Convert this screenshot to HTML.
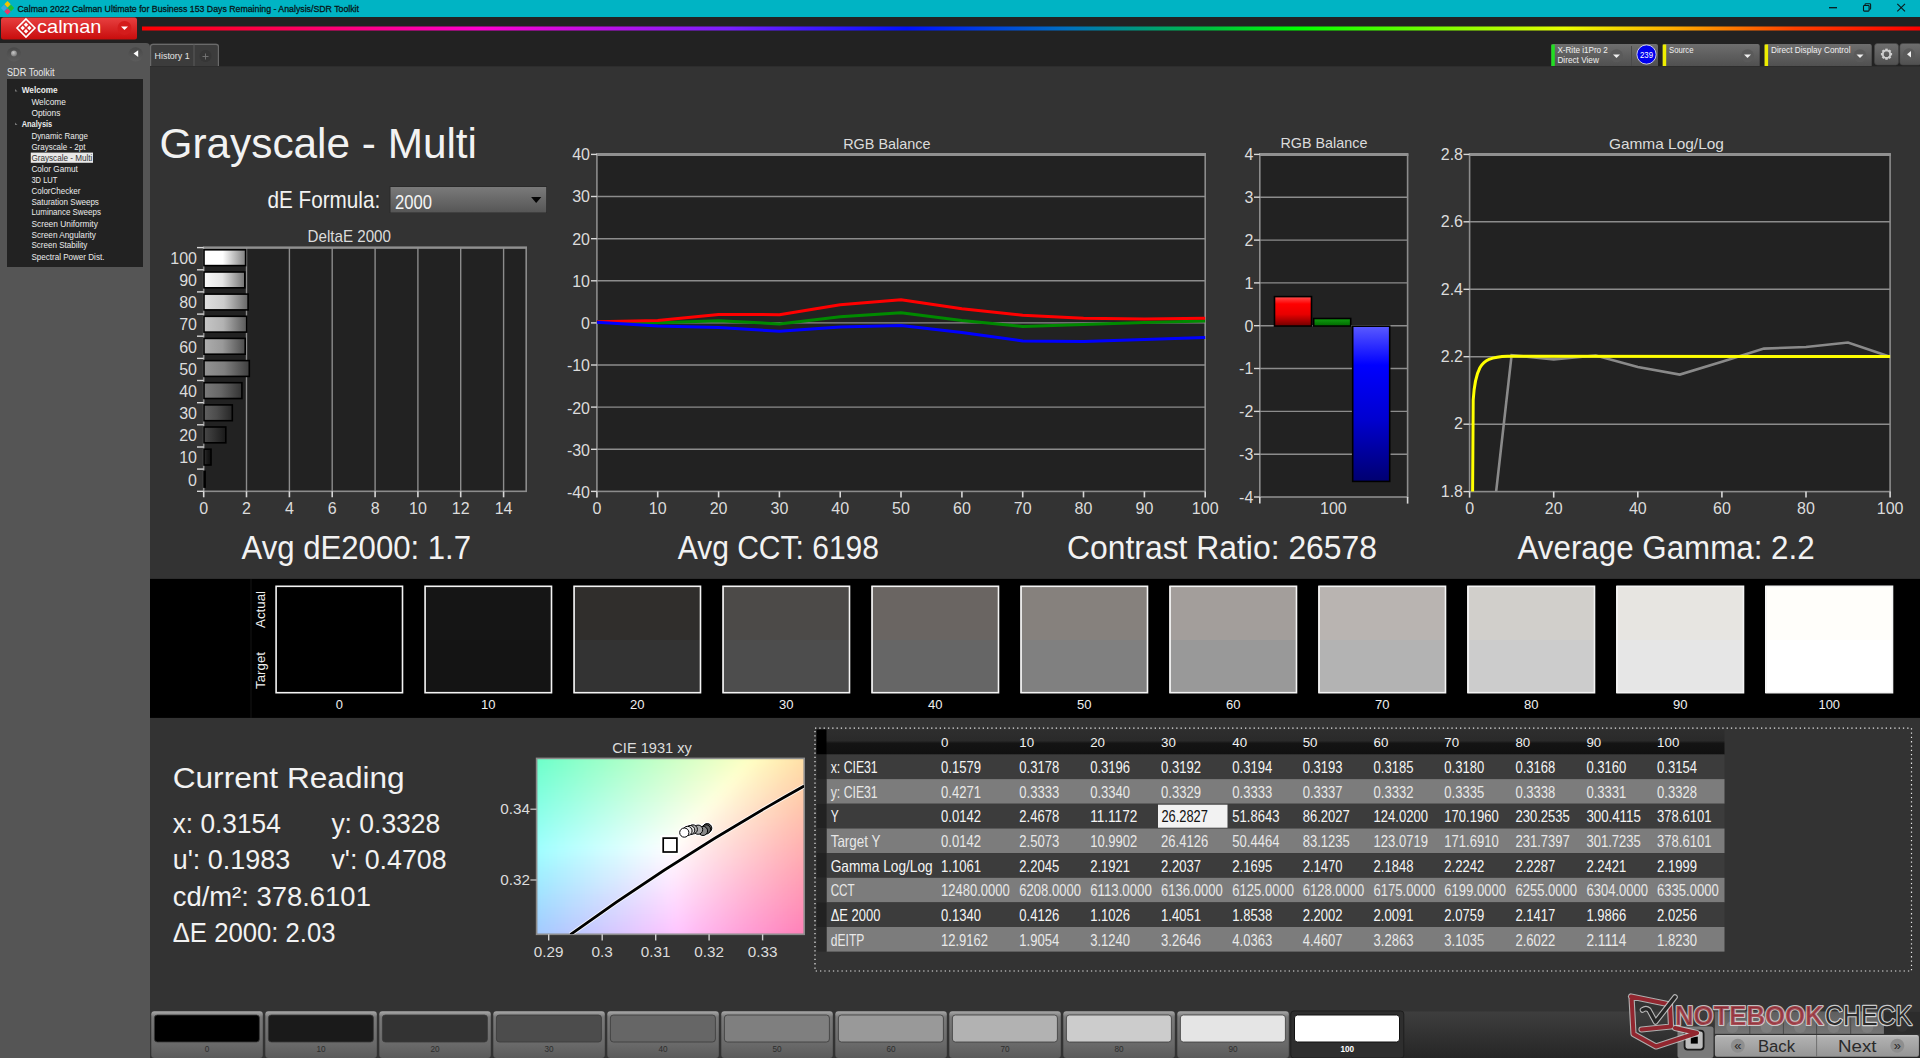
<!DOCTYPE html>
<html><head><meta charset="utf-8"><title>Calman - Grayscale Multi</title>
<style>html,body{margin:0;padding:0;background:#333;overflow:hidden;width:1920px;height:1058px}svg{display:block;font-family:"Liberation Sans",sans-serif}</style>
</head><body>
<svg width="1920" height="1058" viewBox="0 0 1920 1058">
<defs>
<linearGradient id="rainbow" x1="142" y1="0" x2="1920" y2="0" gradientUnits="userSpaceOnUse">
<stop offset="0" stop-color="#ff0000"/><stop offset="0.19" stop-color="#ff00d0"/><stop offset="0.33" stop-color="#7a20ff"/>
<stop offset="0.43" stop-color="#0010ff"/><stop offset="0.52" stop-color="#0070c0"/><stop offset="0.60" stop-color="#00c040"/><stop offset="0.65" stop-color="#00ff00"/>
<stop offset="0.80" stop-color="#e8ff00"/><stop offset="0.86" stop-color="#ffb000"/><stop offset="0.93" stop-color="#ff4000"/><stop offset="1" stop-color="#ff0000"/></linearGradient>
<linearGradient id="redlogo" x1="0" y1="0" x2="0" y2="1"><stop offset="0" stop-color="#e84040"/><stop offset="1" stop-color="#c80c0c"/></linearGradient>
<linearGradient id="pbtn" x1="0" y1="0" x2="0" y2="1"><stop offset="0" stop-color="#484848"/><stop offset="1" stop-color="#5c5c5c"/></linearGradient>
<radialGradient id="pball" cx="0.4" cy="0.35" r="0.7"><stop offset="0" stop-color="#c8c8c8"/><stop offset="1" stop-color="#707070"/></radialGradient>
<linearGradient id="tbgrad" x1="0" y1="0" x2="0" y2="1"><stop offset="0" stop-color="#6e6e6e"/><stop offset="1" stop-color="#505050"/></linearGradient>
<linearGradient id="ddgrad" x1="0" y1="0" x2="0" y2="1"><stop offset="0" stop-color="#7a7a7a"/><stop offset="1" stop-color="#565656"/></linearGradient>
<linearGradient id="bg100" x1="0" y1="0" x2="1" y2="0"><stop offset="0" stop-color="rgb(255,255,255)"/><stop offset="0.45" stop-color="rgb(255,255,255)"/><stop offset="1" stop-color="rgb(127,127,127)"/></linearGradient>
<linearGradient id="bg90" x1="0" y1="0" x2="1" y2="0"><stop offset="0" stop-color="rgb(249,249,249)"/><stop offset="0.45" stop-color="rgb(229,229,229)"/><stop offset="1" stop-color="rgb(114,114,114)"/></linearGradient>
<linearGradient id="bg80" x1="0" y1="0" x2="1" y2="0"><stop offset="0" stop-color="rgb(224,224,224)"/><stop offset="0.45" stop-color="rgb(204,204,204)"/><stop offset="1" stop-color="rgb(102,102,102)"/></linearGradient>
<linearGradient id="bg70" x1="0" y1="0" x2="1" y2="0"><stop offset="0" stop-color="rgb(198,198,198)"/><stop offset="0.45" stop-color="rgb(178,178,178)"/><stop offset="1" stop-color="rgb(89,89,89)"/></linearGradient>
<linearGradient id="bg60" x1="0" y1="0" x2="1" y2="0"><stop offset="0" stop-color="rgb(173,173,173)"/><stop offset="0.45" stop-color="rgb(153,153,153)"/><stop offset="1" stop-color="rgb(76,76,76)"/></linearGradient>
<linearGradient id="bg50" x1="0" y1="0" x2="1" y2="0"><stop offset="0" stop-color="rgb(147,147,147)"/><stop offset="0.45" stop-color="rgb(127,127,127)"/><stop offset="1" stop-color="rgb(63,63,63)"/></linearGradient>
<linearGradient id="bg40" x1="0" y1="0" x2="1" y2="0"><stop offset="0" stop-color="rgb(122,122,122)"/><stop offset="0.45" stop-color="rgb(102,102,102)"/><stop offset="1" stop-color="rgb(51,51,51)"/></linearGradient>
<linearGradient id="bg30" x1="0" y1="0" x2="1" y2="0"><stop offset="0" stop-color="rgb(96,96,96)"/><stop offset="0.45" stop-color="rgb(76,76,76)"/><stop offset="1" stop-color="rgb(38,38,38)"/></linearGradient>
<linearGradient id="bg20" x1="0" y1="0" x2="1" y2="0"><stop offset="0" stop-color="rgb(71,71,71)"/><stop offset="0.45" stop-color="rgb(51,51,51)"/><stop offset="1" stop-color="rgb(25,25,25)"/></linearGradient>
<linearGradient id="bg10" x1="0" y1="0" x2="1" y2="0"><stop offset="0" stop-color="rgb(46,46,46)"/><stop offset="0.45" stop-color="rgb(26,26,26)"/><stop offset="1" stop-color="rgb(13,13,13)"/></linearGradient>
<linearGradient id="bg0" x1="0" y1="0" x2="1" y2="0"><stop offset="0" stop-color="rgb(20,20,20)"/><stop offset="0.45" stop-color="rgb(0,0,0)"/><stop offset="1" stop-color="rgb(0,0,0)"/></linearGradient>
<linearGradient id="rbar" x1="0" y1="0" x2="0" y2="1"><stop offset="0" stop-color="#ff5050"/><stop offset="0.25" stop-color="#ff0000"/><stop offset="0.6" stop-color="#e80000"/><stop offset="1" stop-color="#700000"/></linearGradient>
<linearGradient id="gbar" x1="0" y1="0" x2="0" y2="1"><stop offset="0" stop-color="#10a010"/><stop offset="1" stop-color="#006600"/></linearGradient>
<linearGradient id="bbar" x1="0" y1="0" x2="0" y2="1"><stop offset="0" stop-color="#5a5aff"/><stop offset="0.25" stop-color="#0000ff"/><stop offset="0.6" stop-color="#0000d0"/><stop offset="1" stop-color="#000070"/></linearGradient>
<filter id="cblur" x="0" y="0" width="1" height="1"><feGaussianBlur stdDeviation="5" edgeMode="duplicate"/></filter>
<linearGradient id="thead" x1="0" y1="0" x2="0" y2="1"><stop offset="0" stop-color="#2e2e2e"/><stop offset="0.45" stop-color="#2a2a2a"/><stop offset="0.55" stop-color="#141414"/><stop offset="1" stop-color="#101010"/></linearGradient>
<linearGradient id="btn" x1="0" y1="0" x2="0" y2="1"><stop offset="0" stop-color="#a8a8a8"/><stop offset="0.12" stop-color="#7a7a7a"/><stop offset="0.7" stop-color="#6a6a6a"/><stop offset="1" stop-color="#5a5a5a"/></linearGradient>
<linearGradient id="strip" x1="0" y1="0" x2="0" y2="1"><stop offset="0" stop-color="#3e3e3e"/><stop offset="1" stop-color="#262626"/></linearGradient>
<linearGradient id="nav" x1="0" y1="0" x2="0" y2="1"><stop offset="0" stop-color="#c4c4c4"/><stop offset="0.12" stop-color="#b0b0b0"/><stop offset="1" stop-color="#959595"/></linearGradient>
<linearGradient id="tbtn" x1="0" y1="0" x2="0" y2="1"><stop offset="0" stop-color="#5e5e5e"/><stop offset="1" stop-color="#767676"/></linearGradient>
</defs>
<rect x="0.0" y="0.0" width="1920.0" height="1058.0" fill="#333333" />
<rect x="0.0" y="0.0" width="1920.0" height="17.0" fill="#00b4c4" />
<path d="M7.5 1.0 L10.7 4.2 L7.5 7.4 L4.3 4.2 Z" fill="#f5c400"/>
<path d="M11 4.8 L14.2 8 L11 11.2 L7.8 8 Z" fill="#22c030"/>
<path d="M4 4.8 L7.2 8 L4 11.2 L0.7999999999999998 8 Z" fill="#3aa8e0"/>
<path d="M7.5 8.399999999999999 L10.7 11.6 L7.5 14.8 L4.3 11.6 Z" fill="#e83a6a"/>
<text x="17.5" y="12.3" font-size="9.6" fill="#061618" textLength="341.5" lengthAdjust="spacingAndGlyphs" stroke="#061618" stroke-width="0.3">Calman 2022 Calman Ultimate for Business 153 Days Remaining  - Analysis/SDR Toolkit</text>
<line x1="1829.0" y1="7.7" x2="1837.0" y2="7.7" stroke="#0a1a1c" stroke-width="1.3" />
<rect x="1863.5" y="5.5" width="5.6" height="5.6" rx="0.8" fill="none" stroke="#0a1a1c" stroke-width="1.1"/>
<path d="M1865 5.3 V4.5 Q1865 3.8 1866 3.8 H1869.8 Q1870.6 3.8 1870.6 4.6 V8.6 Q1870.6 9.5 1869.5 9.5" fill="none" stroke="#0a1a1c" stroke-width="1.1"/>
<path d="M1897.3 3.8 L1905 11.3 M1905 3.8 L1897.3 11.3" stroke="#0a1a1c" stroke-width="1.1"/>
<rect x="0.0" y="17.0" width="1920.0" height="49.3" fill="#222222" />
<rect x="142.0" y="26.5" width="1778.0" height="4.0" fill="url(#rainbow)" />
<rect x="1" y="17.5" width="136" height="22" rx="2.5" fill="url(#redlogo)"/>
<g transform="translate(26,28)"><path d="M0 -9 L9 0 L0 9 L-9 0 Z" fill="none" stroke="#fff" stroke-width="1.6"/><path d="M0 -5.5 L2.2 -3.3 L0 -1.1 L-2.2 -3.3Z M0 1.1 L2.2 3.3 L0 5.5 L-2.2 3.3Z M-3.3 -2.2 L-1.1 0 L-3.3 2.2 L-5.5 0Z M3.3 -2.2 L5.5 0 L3.3 2.2 L1.1 0Z" fill="#fff"/></g>
<text x="37.0" y="32.8" font-size="19.0" fill="#ffffff" textLength="64.5" lengthAdjust="spacingAndGlyphs" >calman</text>
<circle cx="124.5" cy="28" r="7" fill="#d41c1c"/>
<path d="M121 26.5 L128 26.5 L124.5 30 Z" fill="#fff"/>
<path d="M0 43 H146 Q150 43 150 47 V1058 H0 Z" fill="#555555"/>
<circle cx="14" cy="54.4" r="7.2" fill="url(#pbtn)"/><circle cx="14" cy="53.6" r="3" fill="url(#pball)"/>
<circle cx="135.7" cy="54.4" r="7.2" fill="url(#pbtn)"/><path d="M133.5 53.6 L138.2 50.2 L138.2 57 Z" fill="#fff"/>
<text x="7.0" y="76.0" font-size="10.3" fill="#e8e8e8" textLength="47.5" lengthAdjust="spacingAndGlyphs" >SDR Toolkit</text>
<rect x="7.0" y="79.0" width="136.0" height="188.0" fill="#222222" />
<text x="21.7" y="93.2" font-size="9.0" fill="#ececec" font-weight="bold" textLength="36.0" lengthAdjust="spacingAndGlyphs" >Welcome</text>
<text x="31.4" y="104.9" font-size="9.0" fill="#ececec" textLength="34.5" lengthAdjust="spacingAndGlyphs" >Welcome</text>
<text x="31.4" y="116.0" font-size="9.0" fill="#ececec" textLength="29.0" lengthAdjust="spacingAndGlyphs" >Options</text>
<text x="21.7" y="126.8" font-size="9.0" fill="#ececec" font-weight="bold" textLength="30.5" lengthAdjust="spacingAndGlyphs" >Analysis</text>
<text x="31.4" y="138.8" font-size="9.0" fill="#ececec" textLength="56.5" lengthAdjust="spacingAndGlyphs" >Dynamic Range</text>
<text x="31.4" y="149.6" font-size="9.0" fill="#ececec" textLength="54.0" lengthAdjust="spacingAndGlyphs" >Grayscale - 2pt</text>
<rect x="30.8" y="152.6" width="62.2" height="10.2" fill="#e8e8e8" />
<text x="31.4" y="160.6" font-size="9.0" fill="#333" textLength="61.0" lengthAdjust="spacingAndGlyphs" >Grayscale - Multi</text>
<text x="31.4" y="171.8" font-size="9.0" fill="#ececec" textLength="46.5" lengthAdjust="spacingAndGlyphs" >Color Gamut</text>
<text x="31.4" y="182.5" font-size="9.0" fill="#ececec" textLength="26.0" lengthAdjust="spacingAndGlyphs" >3D LUT</text>
<text x="31.4" y="193.6" font-size="9.0" fill="#ececec" textLength="49.0" lengthAdjust="spacingAndGlyphs" >ColorChecker</text>
<text x="31.4" y="204.6" font-size="9.0" fill="#ececec" textLength="67.5" lengthAdjust="spacingAndGlyphs" >Saturation Sweeps</text>
<text x="31.4" y="215.4" font-size="9.0" fill="#ececec" textLength="69.5" lengthAdjust="spacingAndGlyphs" >Luminance Sweeps</text>
<text x="31.4" y="226.6" font-size="9.0" fill="#ececec" textLength="66.5" lengthAdjust="spacingAndGlyphs" >Screen Uniformity</text>
<text x="31.4" y="237.6" font-size="9.0" fill="#ececec" textLength="64.5" lengthAdjust="spacingAndGlyphs" >Screen Angularity</text>
<text x="31.4" y="248.4" font-size="9.0" fill="#ececec" textLength="56.0" lengthAdjust="spacingAndGlyphs" >Screen Stability</text>
<text x="31.4" y="259.6" font-size="9.0" fill="#ececec" textLength="73.0" lengthAdjust="spacingAndGlyphs" >Spectral Power Dist.</text>
<path d="M15 89 L17.5 91.5 L15 91.5Z" fill="#777"/><path d="M15 122.5 L17.5 125 L15 125Z" fill="#777"/>
<path d="M150 66 V46 Q150 43.5 153 43.5 H216 Q219 43.5 219 46 V66 Z" fill="#3c3c3c"/>
<path d="M150.6 66 V46.5 Q150.6 44.3 153 44.3 H216 Q218.4 44.3 218.4 46.5 V66" fill="none" stroke="#6a6a6a" stroke-width="1.2"/>
<line x1="194.0" y1="44.0" x2="194.0" y2="66.0" stroke="#5a5a5a" stroke-width="1" />
<text x="154.6" y="59.0" font-size="9.3" fill="#e6e6e6" textLength="35.0" lengthAdjust="spacingAndGlyphs" >History 1</text>
<circle cx="205.5" cy="56" r="6" fill="#363636"/>
<path d="M202.5 56.5 H208.5 M205.5 53.5 V59.5" stroke="#777" stroke-width="0.9"/>
<path d="M1551.3 66 V46 Q1551.3 44 1553.3 44 H1656 Q1658 44 1658 46 V66 Z" fill="url(#tbgrad)"/>
<rect x="1551.3" y="44.5" width="3.5" height="21.5" fill="#22dd22" />
<line x1="1631.5" y1="46.0" x2="1631.5" y2="66.0" stroke="#4a4a4a" stroke-width="1" />
<text x="1557.4" y="53.2" font-size="9.0" fill="#f0f0f0" textLength="50.5" lengthAdjust="spacingAndGlyphs" >X-Rite i1Pro 2</text>
<text x="1557.4" y="63.4" font-size="9.0" fill="#f0f0f0" textLength="41.5" lengthAdjust="spacingAndGlyphs" >Direct View</text>
<circle cx="1616.5" cy="55.8" r="6.5" fill="#5a5a5a"/><path d="M1613.0 54.5 H1620.0 L1616.5 58.0 Z" fill="#f0f0f0"/>
<circle cx="1646.5" cy="54.5" r="9.6" fill="#0000ee" stroke="#e8e8ff" stroke-width="0.8"/>
<text x="1646.5" y="57.6" font-size="8.2" fill="#ffffff" text-anchor="middle" textLength="13.0" lengthAdjust="spacingAndGlyphs" >239</text>
<path d="M1662.7 66 V46 Q1662.7 44 1664.7 44 H1757.7 Q1759.7 44 1759.7 46 V66 Z" fill="url(#tbgrad)"/>
<rect x="1662.7" y="44.5" width="3.5" height="21.5" fill="#eeee00" />
<text x="1669.0" y="53.2" font-size="9.0" fill="#f0f0f0" textLength="24.5" lengthAdjust="spacingAndGlyphs" >Source</text>
<circle cx="1747.5" cy="55.8" r="6.5" fill="#5a5a5a"/><path d="M1744.0 54.5 H1751.0 L1747.5 58.0 Z" fill="#f0f0f0"/>
<path d="M1764.6 66 V46 Q1764.6 44 1766.6 44 H1869.7 Q1871.7 44 1871.7 46 V66 Z" fill="url(#tbgrad)"/>
<rect x="1764.6" y="44.5" width="3.5" height="21.5" fill="#eeee00" />
<text x="1771.0" y="53.2" font-size="9.0" fill="#f0f0f0" textLength="79.5" lengthAdjust="spacingAndGlyphs" >Direct Display Control</text>
<circle cx="1860" cy="55.8" r="6.5" fill="#5a5a5a"/><path d="M1856.5 54.5 H1863.5 L1860 58.0 Z" fill="#f0f0f0"/>
<rect x="1874.5" y="43.5" width="24" height="21.5" rx="3" fill="url(#tbgrad)" stroke="#444" stroke-width="0.6"/>
<rect x="1885.30" y="48.60" width="2.4" height="2.6" fill="#cfcfcf" transform="rotate(0 1886.5 54.2)"/><rect x="1885.30" y="48.60" width="2.4" height="2.6" fill="#cfcfcf" transform="rotate(45 1886.5 54.2)"/><rect x="1885.30" y="48.60" width="2.4" height="2.6" fill="#cfcfcf" transform="rotate(90 1886.5 54.2)"/><rect x="1885.30" y="48.60" width="2.4" height="2.6" fill="#cfcfcf" transform="rotate(135 1886.5 54.2)"/><rect x="1885.30" y="48.60" width="2.4" height="2.6" fill="#cfcfcf" transform="rotate(180 1886.5 54.2)"/><rect x="1885.30" y="48.60" width="2.4" height="2.6" fill="#cfcfcf" transform="rotate(225 1886.5 54.2)"/><rect x="1885.30" y="48.60" width="2.4" height="2.6" fill="#cfcfcf" transform="rotate(270 1886.5 54.2)"/><rect x="1885.30" y="48.60" width="2.4" height="2.6" fill="#cfcfcf" transform="rotate(315 1886.5 54.2)"/><circle cx="1886.5" cy="54.2" r="3.8" fill="none" stroke="#cfcfcf" stroke-width="1.8"/>
<rect x="1899.8" y="43.5" width="22" height="21.5" rx="3" fill="url(#tbgrad)" stroke="#444" stroke-width="0.6"/>
<circle cx="1909" cy="54.2" r="6" fill="#5a5a5a"/><path d="M1907 54.2 L1911 51 V57.4 Z" fill="#f0f0f0"/>
<text x="159.5" y="158.2" font-size="42.6" fill="#f2f2f2" textLength="317.5" lengthAdjust="spacingAndGlyphs" >Grayscale - Multi</text>
<text x="267.4" y="208.0" font-size="24.0" fill="#f2f2f2" textLength="112.8" lengthAdjust="spacingAndGlyphs" >dE Formula:</text>
<rect x="389.5" y="186" width="157.5" height="27" fill="#2a2a2a"/>
<rect x="390.5" y="187.0" width="155.7" height="25.5" fill="url(#ddgrad)" />
<text x="395.0" y="208.7" font-size="19.6" fill="#f4f4f4" textLength="37.0" lengthAdjust="spacingAndGlyphs" >2000</text>
<path d="M531.1 197 H541.3 L536.2 203.1 Z" fill="#050505"/>
<text x="307.5" y="242.4" font-size="16.6" fill="#dcdcdc" textLength="83.5" lengthAdjust="spacingAndGlyphs" >DeltaE 2000</text>
<rect x="203.7" y="247.6" width="322.5" height="243.7" fill="#222222" />
<line x1="246.5" y1="247.6" x2="246.5" y2="491.3" stroke="#8c8c8c" stroke-width="1.4" />
<line x1="289.4" y1="247.6" x2="289.4" y2="491.3" stroke="#8c8c8c" stroke-width="1.4" />
<line x1="332.2" y1="247.6" x2="332.2" y2="491.3" stroke="#8c8c8c" stroke-width="1.4" />
<line x1="375.1" y1="247.6" x2="375.1" y2="491.3" stroke="#8c8c8c" stroke-width="1.4" />
<line x1="417.9" y1="247.6" x2="417.9" y2="491.3" stroke="#8c8c8c" stroke-width="1.4" />
<line x1="460.7" y1="247.6" x2="460.7" y2="491.3" stroke="#8c8c8c" stroke-width="1.4" />
<line x1="503.6" y1="247.6" x2="503.6" y2="491.3" stroke="#8c8c8c" stroke-width="1.4" />
<rect x="203.7" y="247.6" width="322.5" height="243.7" fill="none" stroke="#8c8c8c" stroke-width="1.6"/>
<line x1="202.9" y1="247.6" x2="527.0" y2="247.6" stroke="#909090" stroke-width="2.4" />
<line x1="197.0" y1="247.6" x2="203.7" y2="247.6" stroke="#d8d8d8" stroke-width="1.4" />
<text x="197.0" y="264.0" font-size="16.0" fill="#dcdcdc" text-anchor="end" >100</text>
<rect x="204.0" y="249.8" width="41.6" height="15.8" fill="url(#bg100)" stroke="#000" stroke-width="1.6"/>
<line x1="197.0" y1="269.8" x2="203.7" y2="269.8" stroke="#d8d8d8" stroke-width="1.4" />
<text x="197.0" y="286.1" font-size="16.0" fill="#dcdcdc" text-anchor="end" >90</text>
<rect x="204.0" y="272.0" width="40.8" height="15.8" fill="url(#bg90)" stroke="#000" stroke-width="1.6"/>
<line x1="197.0" y1="291.9" x2="203.7" y2="291.9" stroke="#d8d8d8" stroke-width="1.4" />
<text x="197.0" y="308.3" font-size="16.0" fill="#dcdcdc" text-anchor="end" >80</text>
<rect x="204.0" y="294.1" width="44.1" height="15.8" fill="url(#bg80)" stroke="#000" stroke-width="1.6"/>
<line x1="197.0" y1="314.1" x2="203.7" y2="314.1" stroke="#d8d8d8" stroke-width="1.4" />
<text x="197.0" y="330.4" font-size="16.0" fill="#dcdcdc" text-anchor="end" >70</text>
<rect x="204.0" y="316.3" width="42.7" height="15.8" fill="url(#bg70)" stroke="#000" stroke-width="1.6"/>
<line x1="197.0" y1="336.2" x2="203.7" y2="336.2" stroke="#d8d8d8" stroke-width="1.4" />
<text x="197.0" y="352.6" font-size="16.0" fill="#dcdcdc" text-anchor="end" >60</text>
<rect x="204.0" y="338.4" width="41.2" height="15.8" fill="url(#bg60)" stroke="#000" stroke-width="1.6"/>
<line x1="197.0" y1="358.4" x2="203.7" y2="358.4" stroke="#d8d8d8" stroke-width="1.4" />
<text x="197.0" y="374.8" font-size="16.0" fill="#dcdcdc" text-anchor="end" >50</text>
<rect x="204.0" y="360.6" width="45.3" height="15.8" fill="url(#bg50)" stroke="#000" stroke-width="1.6"/>
<line x1="197.0" y1="380.5" x2="203.7" y2="380.5" stroke="#d8d8d8" stroke-width="1.4" />
<text x="197.0" y="396.9" font-size="16.0" fill="#dcdcdc" text-anchor="end" >40</text>
<rect x="204.0" y="382.7" width="37.9" height="15.8" fill="url(#bg40)" stroke="#000" stroke-width="1.6"/>
<line x1="197.0" y1="402.7" x2="203.7" y2="402.7" stroke="#d8d8d8" stroke-width="1.4" />
<text x="197.0" y="419.1" font-size="16.0" fill="#dcdcdc" text-anchor="end" >30</text>
<rect x="204.0" y="404.9" width="28.3" height="15.8" fill="url(#bg30)" stroke="#000" stroke-width="1.6"/>
<line x1="197.0" y1="424.8" x2="203.7" y2="424.8" stroke="#d8d8d8" stroke-width="1.4" />
<text x="197.0" y="441.2" font-size="16.0" fill="#dcdcdc" text-anchor="end" >20</text>
<rect x="204.0" y="427.0" width="21.8" height="15.8" fill="url(#bg20)" stroke="#000" stroke-width="1.6"/>
<line x1="197.0" y1="447.0" x2="203.7" y2="447.0" stroke="#d8d8d8" stroke-width="1.4" />
<text x="197.0" y="463.4" font-size="16.0" fill="#dcdcdc" text-anchor="end" >10</text>
<rect x="204.0" y="449.2" width="7.0" height="15.8" fill="url(#bg10)" stroke="#000" stroke-width="1.6"/>
<line x1="197.0" y1="469.1" x2="203.7" y2="469.1" stroke="#d8d8d8" stroke-width="1.4" />
<text x="197.0" y="485.5" font-size="16.0" fill="#dcdcdc" text-anchor="end" >0</text>
<rect x="204.0" y="471.3" width="1.1" height="15.8" fill="url(#bg0)" stroke="#000" stroke-width="1.6"/>
<line x1="197.0" y1="491.3" x2="203.7" y2="491.3" stroke="#d8d8d8" stroke-width="1.4" />
<line x1="203.7" y1="491.3" x2="203.7" y2="497.3" stroke="#d8d8d8" stroke-width="1.6" />
<text x="203.7" y="513.6" font-size="16.0" fill="#dcdcdc" text-anchor="middle" >0</text>
<line x1="246.5" y1="491.3" x2="246.5" y2="497.3" stroke="#d8d8d8" stroke-width="1.6" />
<text x="246.5" y="513.6" font-size="16.0" fill="#dcdcdc" text-anchor="middle" >2</text>
<line x1="289.4" y1="491.3" x2="289.4" y2="497.3" stroke="#d8d8d8" stroke-width="1.6" />
<text x="289.4" y="513.6" font-size="16.0" fill="#dcdcdc" text-anchor="middle" >4</text>
<line x1="332.2" y1="491.3" x2="332.2" y2="497.3" stroke="#d8d8d8" stroke-width="1.6" />
<text x="332.2" y="513.6" font-size="16.0" fill="#dcdcdc" text-anchor="middle" >6</text>
<line x1="375.1" y1="491.3" x2="375.1" y2="497.3" stroke="#d8d8d8" stroke-width="1.6" />
<text x="375.1" y="513.6" font-size="16.0" fill="#dcdcdc" text-anchor="middle" >8</text>
<line x1="417.9" y1="491.3" x2="417.9" y2="497.3" stroke="#d8d8d8" stroke-width="1.6" />
<text x="417.9" y="513.6" font-size="16.0" fill="#dcdcdc" text-anchor="middle" >10</text>
<line x1="460.7" y1="491.3" x2="460.7" y2="497.3" stroke="#d8d8d8" stroke-width="1.6" />
<text x="460.7" y="513.6" font-size="16.0" fill="#dcdcdc" text-anchor="middle" >12</text>
<line x1="503.6" y1="491.3" x2="503.6" y2="497.3" stroke="#d8d8d8" stroke-width="1.6" />
<text x="503.6" y="513.6" font-size="16.0" fill="#dcdcdc" text-anchor="middle" >14</text>
<text x="843.2" y="149.2" font-size="15.0" fill="#dcdcdc" textLength="87.4" lengthAdjust="spacingAndGlyphs" >RGB Balance</text>
<rect x="596.9" y="154.4" width="608.3" height="337.0" fill="#222222" />
<line x1="596.9" y1="196.5" x2="1205.2" y2="196.5" stroke="#8c8c8c" stroke-width="1.4" />
<line x1="596.9" y1="238.7" x2="1205.2" y2="238.7" stroke="#8c8c8c" stroke-width="1.4" />
<line x1="596.9" y1="280.8" x2="1205.2" y2="280.8" stroke="#8c8c8c" stroke-width="1.4" />
<line x1="596.9" y1="322.9" x2="1205.2" y2="322.9" stroke="#8c8c8c" stroke-width="1.4" />
<line x1="596.9" y1="365.0" x2="1205.2" y2="365.0" stroke="#8c8c8c" stroke-width="1.4" />
<line x1="596.9" y1="407.1" x2="1205.2" y2="407.1" stroke="#8c8c8c" stroke-width="1.4" />
<line x1="596.9" y1="449.3" x2="1205.2" y2="449.3" stroke="#8c8c8c" stroke-width="1.4" />
<rect x="596.9" y="154.4" width="608.3" height="337.0" fill="none" stroke="#8c8c8c" stroke-width="1.6"/>
<line x1="596.1" y1="154.4" x2="1206.0" y2="154.4" stroke="#909090" stroke-width="3" />
<line x1="591.0" y1="154.4" x2="596.9" y2="154.4" stroke="#d8d8d8" stroke-width="1.4" />
<text x="590.0" y="159.8" font-size="16.0" fill="#dcdcdc" text-anchor="end" >40</text>
<line x1="591.0" y1="196.5" x2="596.9" y2="196.5" stroke="#d8d8d8" stroke-width="1.4" />
<text x="590.0" y="202.1" font-size="16.0" fill="#dcdcdc" text-anchor="end" >30</text>
<line x1="591.0" y1="238.7" x2="596.9" y2="238.7" stroke="#d8d8d8" stroke-width="1.4" />
<text x="590.0" y="244.5" font-size="16.0" fill="#dcdcdc" text-anchor="end" >20</text>
<line x1="591.0" y1="280.8" x2="596.9" y2="280.8" stroke="#d8d8d8" stroke-width="1.4" />
<text x="590.0" y="286.8" font-size="16.0" fill="#dcdcdc" text-anchor="end" >10</text>
<line x1="591.0" y1="322.9" x2="596.9" y2="322.9" stroke="#d8d8d8" stroke-width="1.4" />
<text x="590.0" y="329.1" font-size="16.0" fill="#dcdcdc" text-anchor="end" >0</text>
<line x1="591.0" y1="365.0" x2="596.9" y2="365.0" stroke="#d8d8d8" stroke-width="1.4" />
<text x="590.0" y="371.4" font-size="16.0" fill="#dcdcdc" text-anchor="end" >-10</text>
<line x1="591.0" y1="407.1" x2="596.9" y2="407.1" stroke="#d8d8d8" stroke-width="1.4" />
<text x="590.0" y="413.7" font-size="16.0" fill="#dcdcdc" text-anchor="end" >-20</text>
<line x1="591.0" y1="449.3" x2="596.9" y2="449.3" stroke="#d8d8d8" stroke-width="1.4" />
<text x="590.0" y="456.1" font-size="16.0" fill="#dcdcdc" text-anchor="end" >-30</text>
<line x1="591.0" y1="491.4" x2="596.9" y2="491.4" stroke="#d8d8d8" stroke-width="1.4" />
<text x="590.0" y="498.4" font-size="16.0" fill="#dcdcdc" text-anchor="end" >-40</text>
<line x1="596.9" y1="491.4" x2="596.9" y2="497.4" stroke="#d8d8d8" stroke-width="1.6" />
<text x="596.9" y="513.7" font-size="16.0" fill="#dcdcdc" text-anchor="middle" >0</text>
<line x1="657.7" y1="491.4" x2="657.7" y2="497.4" stroke="#d8d8d8" stroke-width="1.6" />
<text x="657.7" y="513.7" font-size="16.0" fill="#dcdcdc" text-anchor="middle" >10</text>
<line x1="718.6" y1="491.4" x2="718.6" y2="497.4" stroke="#d8d8d8" stroke-width="1.6" />
<text x="718.6" y="513.7" font-size="16.0" fill="#dcdcdc" text-anchor="middle" >20</text>
<line x1="779.4" y1="491.4" x2="779.4" y2="497.4" stroke="#d8d8d8" stroke-width="1.6" />
<text x="779.4" y="513.7" font-size="16.0" fill="#dcdcdc" text-anchor="middle" >30</text>
<line x1="840.2" y1="491.4" x2="840.2" y2="497.4" stroke="#d8d8d8" stroke-width="1.6" />
<text x="840.2" y="513.7" font-size="16.0" fill="#dcdcdc" text-anchor="middle" >40</text>
<line x1="901.0" y1="491.4" x2="901.0" y2="497.4" stroke="#d8d8d8" stroke-width="1.6" />
<text x="901.0" y="513.7" font-size="16.0" fill="#dcdcdc" text-anchor="middle" >50</text>
<line x1="961.9" y1="491.4" x2="961.9" y2="497.4" stroke="#d8d8d8" stroke-width="1.6" />
<text x="961.9" y="513.7" font-size="16.0" fill="#dcdcdc" text-anchor="middle" >60</text>
<line x1="1022.7" y1="491.4" x2="1022.7" y2="497.4" stroke="#d8d8d8" stroke-width="1.6" />
<text x="1022.7" y="513.7" font-size="16.0" fill="#dcdcdc" text-anchor="middle" >70</text>
<line x1="1083.5" y1="491.4" x2="1083.5" y2="497.4" stroke="#d8d8d8" stroke-width="1.6" />
<text x="1083.5" y="513.7" font-size="16.0" fill="#dcdcdc" text-anchor="middle" >80</text>
<line x1="1144.4" y1="491.4" x2="1144.4" y2="497.4" stroke="#d8d8d8" stroke-width="1.6" />
<text x="1144.4" y="513.7" font-size="16.0" fill="#dcdcdc" text-anchor="middle" >90</text>
<line x1="1205.2" y1="491.4" x2="1205.2" y2="497.4" stroke="#d8d8d8" stroke-width="1.6" />
<text x="1205.2" y="513.7" font-size="16.0" fill="#dcdcdc" text-anchor="middle" >100</text>
<polyline points="596.9,321.7 657.7,322.8 718.6,320.7 779.4,323.9 840.2,316.7 901.0,312.7 961.9,320.6 1022.7,326.5 1083.5,324.5 1144.4,322.5 1205.2,321.0" fill="none" stroke="#008a00" stroke-width="3" stroke-linejoin="round"/>
<polyline points="596.9,321.7 657.7,320.4 718.6,314.4 779.4,314.7 840.2,304.8 901.0,299.8 961.9,308.7 1022.7,315.2 1083.5,318.2 1144.4,319.0 1205.2,318.2" fill="none" stroke="#ff0000" stroke-width="3" stroke-linejoin="round"/>
<polyline points="596.9,322.3 657.7,326.0 718.6,327.6 779.4,331.3 840.2,327.0 901.0,325.5 961.9,332.4 1022.7,341.0 1083.5,341.4 1144.4,339.4 1205.2,337.4" fill="none" stroke="#0000ff" stroke-width="3" stroke-linejoin="round"/>
<text x="1280.4" y="148.3" font-size="15.0" fill="#dcdcdc" textLength="87.0" lengthAdjust="spacingAndGlyphs" >RGB Balance</text>
<rect x="1259.8" y="154.4" width="147.8" height="342.6" fill="#222222" />
<line x1="1259.8" y1="197.2" x2="1407.6" y2="197.2" stroke="#8c8c8c" stroke-width="1.4" />
<line x1="1259.8" y1="240.1" x2="1407.6" y2="240.1" stroke="#8c8c8c" stroke-width="1.4" />
<line x1="1259.8" y1="282.9" x2="1407.6" y2="282.9" stroke="#8c8c8c" stroke-width="1.4" />
<line x1="1259.8" y1="325.7" x2="1407.6" y2="325.7" stroke="#8c8c8c" stroke-width="1.4" />
<line x1="1259.8" y1="368.5" x2="1407.6" y2="368.5" stroke="#8c8c8c" stroke-width="1.4" />
<line x1="1259.8" y1="411.4" x2="1407.6" y2="411.4" stroke="#8c8c8c" stroke-width="1.4" />
<line x1="1259.8" y1="454.2" x2="1407.6" y2="454.2" stroke="#8c8c8c" stroke-width="1.4" />
<rect x="1259.8" y="154.4" width="147.8" height="342.6" fill="none" stroke="#8c8c8c" stroke-width="1.6"/>
<line x1="1259.0" y1="154.4" x2="1408.4" y2="154.4" stroke="#909090" stroke-width="3" />
<line x1="1254.0" y1="154.4" x2="1259.8" y2="154.4" stroke="#d8d8d8" stroke-width="1.4" />
<text x="1253.3" y="159.8" font-size="16.0" fill="#dcdcdc" text-anchor="end" >4</text>
<line x1="1254.0" y1="197.2" x2="1259.8" y2="197.2" stroke="#d8d8d8" stroke-width="1.4" />
<text x="1253.3" y="202.7" font-size="16.0" fill="#dcdcdc" text-anchor="end" >3</text>
<line x1="1254.0" y1="240.1" x2="1259.8" y2="240.1" stroke="#d8d8d8" stroke-width="1.4" />
<text x="1253.3" y="245.7" font-size="16.0" fill="#dcdcdc" text-anchor="end" >2</text>
<line x1="1254.0" y1="282.9" x2="1259.8" y2="282.9" stroke="#d8d8d8" stroke-width="1.4" />
<text x="1253.3" y="288.6" font-size="16.0" fill="#dcdcdc" text-anchor="end" >1</text>
<line x1="1254.0" y1="325.7" x2="1259.8" y2="325.7" stroke="#d8d8d8" stroke-width="1.4" />
<text x="1253.3" y="331.5" font-size="16.0" fill="#dcdcdc" text-anchor="end" >0</text>
<line x1="1254.0" y1="368.5" x2="1259.8" y2="368.5" stroke="#d8d8d8" stroke-width="1.4" />
<text x="1253.3" y="374.4" font-size="16.0" fill="#dcdcdc" text-anchor="end" >-1</text>
<line x1="1254.0" y1="411.4" x2="1259.8" y2="411.4" stroke="#d8d8d8" stroke-width="1.4" />
<text x="1253.3" y="417.4" font-size="16.0" fill="#dcdcdc" text-anchor="end" >-2</text>
<line x1="1254.0" y1="454.2" x2="1259.8" y2="454.2" stroke="#d8d8d8" stroke-width="1.4" />
<text x="1253.3" y="460.3" font-size="16.0" fill="#dcdcdc" text-anchor="end" >-3</text>
<line x1="1254.0" y1="497.0" x2="1259.8" y2="497.0" stroke="#d8d8d8" stroke-width="1.4" />
<text x="1253.3" y="503.2" font-size="16.0" fill="#dcdcdc" text-anchor="end" >-4</text>
<line x1="1259.8" y1="497.0" x2="1259.8" y2="503.6" stroke="#d8d8d8" stroke-width="1.6" />
<line x1="1407.6" y1="497.0" x2="1407.6" y2="503.6" stroke="#d8d8d8" stroke-width="1.6" />
<text x="1333.4" y="513.8" font-size="16.0" fill="#dcdcdc" text-anchor="middle" >100</text>
<rect x="1274.5" y="296.6" width="37" height="29.5" fill="url(#rbar)" stroke="#000" stroke-width="1.6"/>
<rect x="1313.7" y="318.5" width="37" height="7.6" fill="url(#gbar)" stroke="#000" stroke-width="1.6"/>
<rect x="1352.7" y="326.2" width="37" height="155.2" fill="url(#bbar)" stroke="#000" stroke-width="1.6"/>
<text x="1608.9" y="148.8" font-size="15.0" fill="#dcdcdc" textLength="115.0" lengthAdjust="spacingAndGlyphs" >Gamma Log/Log</text>
<rect x="1469.6" y="154.4" width="420.5" height="337.2" fill="#222222" />
<line x1="1469.6" y1="221.8" x2="1890.1" y2="221.8" stroke="#8c8c8c" stroke-width="1.4" />
<line x1="1469.6" y1="289.3" x2="1890.1" y2="289.3" stroke="#8c8c8c" stroke-width="1.4" />
<line x1="1469.6" y1="356.7" x2="1890.1" y2="356.7" stroke="#8c8c8c" stroke-width="1.4" />
<line x1="1469.6" y1="424.2" x2="1890.1" y2="424.2" stroke="#8c8c8c" stroke-width="1.4" />
<rect x="1469.6" y="154.4" width="420.5" height="337.2" fill="none" stroke="#8c8c8c" stroke-width="1.6"/>
<line x1="1468.8" y1="154.4" x2="1890.9" y2="154.4" stroke="#909090" stroke-width="3" />
<line x1="1463.5" y1="154.4" x2="1469.6" y2="154.4" stroke="#d8d8d8" stroke-width="1.4" />
<text x="1463.0" y="159.6" font-size="16.0" fill="#dcdcdc" text-anchor="end" >2.8</text>
<line x1="1463.5" y1="221.8" x2="1469.6" y2="221.8" stroke="#d8d8d8" stroke-width="1.4" />
<text x="1463.0" y="227.0" font-size="16.0" fill="#dcdcdc" text-anchor="end" >2.6</text>
<line x1="1463.5" y1="289.3" x2="1469.6" y2="289.3" stroke="#d8d8d8" stroke-width="1.4" />
<text x="1463.0" y="294.5" font-size="16.0" fill="#dcdcdc" text-anchor="end" >2.4</text>
<line x1="1463.5" y1="356.7" x2="1469.6" y2="356.7" stroke="#d8d8d8" stroke-width="1.4" />
<text x="1463.0" y="361.9" font-size="16.0" fill="#dcdcdc" text-anchor="end" >2.2</text>
<line x1="1463.5" y1="424.2" x2="1469.6" y2="424.2" stroke="#d8d8d8" stroke-width="1.4" />
<text x="1463.0" y="429.4" font-size="16.0" fill="#dcdcdc" text-anchor="end" >2</text>
<line x1="1463.5" y1="491.6" x2="1469.6" y2="491.6" stroke="#d8d8d8" stroke-width="1.4" />
<text x="1463.0" y="496.8" font-size="16.0" fill="#dcdcdc" text-anchor="end" >1.8</text>
<line x1="1469.6" y1="491.6" x2="1469.6" y2="497.6" stroke="#d8d8d8" stroke-width="1.6" />
<text x="1469.6" y="513.8" font-size="16.0" fill="#dcdcdc" text-anchor="middle" >0</text>
<line x1="1553.7" y1="491.6" x2="1553.7" y2="497.6" stroke="#d8d8d8" stroke-width="1.6" />
<text x="1553.7" y="513.8" font-size="16.0" fill="#dcdcdc" text-anchor="middle" >20</text>
<line x1="1637.8" y1="491.6" x2="1637.8" y2="497.6" stroke="#d8d8d8" stroke-width="1.6" />
<text x="1637.8" y="513.8" font-size="16.0" fill="#dcdcdc" text-anchor="middle" >40</text>
<line x1="1721.9" y1="491.6" x2="1721.9" y2="497.6" stroke="#d8d8d8" stroke-width="1.6" />
<text x="1721.9" y="513.8" font-size="16.0" fill="#dcdcdc" text-anchor="middle" >60</text>
<line x1="1806.0" y1="491.6" x2="1806.0" y2="497.6" stroke="#d8d8d8" stroke-width="1.6" />
<text x="1806.0" y="513.8" font-size="16.0" fill="#dcdcdc" text-anchor="middle" >80</text>
<line x1="1890.1" y1="491.6" x2="1890.1" y2="497.6" stroke="#d8d8d8" stroke-width="1.6" />
<text x="1890.1" y="513.8" font-size="16.0" fill="#dcdcdc" text-anchor="middle" >100</text>
<clipPath id="gclip"><rect x="1469.6" y="154.4" width="420.5" height="337.20000000000005"/></clipPath>
<polyline points="1469.6,725.6 1511.6,355.2 1553.7,359.4 1595.8,355.5 1637.8,367.0 1679.8,374.6 1721.9,361.8 1763.9,348.6 1806.0,347.0 1848.0,342.5 1890.1,356.8" fill="none" stroke="#8a8a8a" stroke-width="2.6" clip-path="url(#gclip)"/>
<path d="M1472.6 491.6 L1473.2 400 Q1474.5 378 1479.9 367.7 Q1483.5 361.5 1489 359.3 Q1496 356.5 1507.5 356.2 L1890.1 356.5" fill="none" stroke="#ffff00" stroke-width="3"/>
<text x="241.6" y="558.7" font-size="33.9" fill="#f2f2f2" textLength="229.4" lengthAdjust="spacingAndGlyphs" >Avg dE2000: 1.7</text>
<text x="677.7" y="558.7" font-size="33.9" fill="#f2f2f2" textLength="201.3" lengthAdjust="spacingAndGlyphs" >Avg CCT: 6198</text>
<text x="1067.0" y="558.7" font-size="33.9" fill="#f2f2f2" textLength="310.0" lengthAdjust="spacingAndGlyphs" >Contrast Ratio: 26578</text>
<text x="1517.5" y="558.7" font-size="33.9" fill="#f2f2f2" textLength="297.1" lengthAdjust="spacingAndGlyphs" >Average Gamma: 2.2</text>
<rect x="150.0" y="578.9" width="1770.0" height="139.0" fill="#000000" />
<line x1="251.0" y1="579.0" x2="251.0" y2="718.0" stroke="#141414" stroke-width="1" />
<rect x="275.0" y="586.0" width="128.0" height="54.0" fill="#000000" shape-rendering="crispEdges"/>
<rect x="275.0" y="640.0" width="128.0" height="53.0" fill="#000000" shape-rendering="crispEdges"/>
<rect x="276.1" y="586.3" width="126.4" height="106.4" fill="none" stroke="#f4f4f4" stroke-width="1.6"/>
<text x="339.3" y="708.8" font-size="12.0" fill="#f0f0f0" text-anchor="middle" textLength="7.2" lengthAdjust="spacingAndGlyphs" >0</text>
<rect x="424.0" y="586.0" width="128.0" height="54.0" fill="#151515" shape-rendering="crispEdges"/>
<rect x="424.0" y="640.0" width="128.0" height="53.0" fill="#141414" shape-rendering="crispEdges"/>
<rect x="425.1" y="586.3" width="126.4" height="106.4" fill="none" stroke="#f4f4f4" stroke-width="1.6"/>
<text x="488.3" y="708.8" font-size="12.0" fill="#f0f0f0" text-anchor="middle" textLength="14.5" lengthAdjust="spacingAndGlyphs" >10</text>
<rect x="573.0" y="586.0" width="128.0" height="54.0" fill="#302e2c" shape-rendering="crispEdges"/>
<rect x="573.0" y="640.0" width="128.0" height="53.0" fill="#333333" shape-rendering="crispEdges"/>
<rect x="574.1" y="586.3" width="126.4" height="106.4" fill="none" stroke="#f4f4f4" stroke-width="1.6"/>
<text x="637.3" y="708.8" font-size="12.0" fill="#f0f0f0" text-anchor="middle" textLength="14.5" lengthAdjust="spacingAndGlyphs" >20</text>
<rect x="722.0" y="586.0" width="128.0" height="54.0" fill="#4c4a48" shape-rendering="crispEdges"/>
<rect x="722.0" y="640.0" width="128.0" height="53.0" fill="#4d4d4d" shape-rendering="crispEdges"/>
<rect x="723.1" y="586.3" width="126.4" height="106.4" fill="none" stroke="#f4f4f4" stroke-width="1.6"/>
<text x="786.3" y="708.8" font-size="12.0" fill="#f0f0f0" text-anchor="middle" textLength="14.5" lengthAdjust="spacingAndGlyphs" >30</text>
<rect x="871.0" y="586.0" width="128.0" height="54.0" fill="#6a6562" shape-rendering="crispEdges"/>
<rect x="871.0" y="640.0" width="128.0" height="53.0" fill="#666666" shape-rendering="crispEdges"/>
<rect x="872.1" y="586.3" width="126.4" height="106.4" fill="none" stroke="#f4f4f4" stroke-width="1.6"/>
<text x="935.3" y="708.8" font-size="12.0" fill="#f0f0f0" text-anchor="middle" textLength="14.5" lengthAdjust="spacingAndGlyphs" >40</text>
<rect x="1020.0" y="586.0" width="128.0" height="54.0" fill="#86817d" shape-rendering="crispEdges"/>
<rect x="1020.0" y="640.0" width="128.0" height="53.0" fill="#808080" shape-rendering="crispEdges"/>
<rect x="1021.1" y="586.3" width="126.4" height="106.4" fill="none" stroke="#f4f4f4" stroke-width="1.6"/>
<text x="1084.3" y="708.8" font-size="12.0" fill="#f0f0f0" text-anchor="middle" textLength="14.5" lengthAdjust="spacingAndGlyphs" >50</text>
<rect x="1169.0" y="586.0" width="128.0" height="54.0" fill="#a39e9b" shape-rendering="crispEdges"/>
<rect x="1169.0" y="640.0" width="128.0" height="53.0" fill="#999999" shape-rendering="crispEdges"/>
<rect x="1170.1" y="586.3" width="126.4" height="106.4" fill="none" stroke="#f4f4f4" stroke-width="1.6"/>
<text x="1233.3" y="708.8" font-size="12.0" fill="#f0f0f0" text-anchor="middle" textLength="14.5" lengthAdjust="spacingAndGlyphs" >60</text>
<rect x="1318.0" y="586.0" width="128.0" height="54.0" fill="#b9b4b1" shape-rendering="crispEdges"/>
<rect x="1318.0" y="640.0" width="128.0" height="53.0" fill="#b3b3b3" shape-rendering="crispEdges"/>
<rect x="1319.1" y="586.3" width="126.4" height="106.4" fill="none" stroke="#f4f4f4" stroke-width="1.6"/>
<text x="1382.3" y="708.8" font-size="12.0" fill="#f0f0f0" text-anchor="middle" textLength="14.5" lengthAdjust="spacingAndGlyphs" >70</text>
<rect x="1467.0" y="586.0" width="128.0" height="54.0" fill="#d1cfcb" shape-rendering="crispEdges"/>
<rect x="1467.0" y="640.0" width="128.0" height="53.0" fill="#cccccc" shape-rendering="crispEdges"/>
<rect x="1468.1" y="586.3" width="126.4" height="106.4" fill="none" stroke="#f4f4f4" stroke-width="1.6"/>
<text x="1531.3" y="708.8" font-size="12.0" fill="#f0f0f0" text-anchor="middle" textLength="14.5" lengthAdjust="spacingAndGlyphs" >80</text>
<rect x="1616.0" y="586.0" width="128.0" height="54.0" fill="#e7e5e1" shape-rendering="crispEdges"/>
<rect x="1616.0" y="640.0" width="128.0" height="53.0" fill="#e6e6e6" shape-rendering="crispEdges"/>
<rect x="1617.1" y="586.3" width="126.4" height="106.4" fill="none" stroke="#f4f4f4" stroke-width="1.6"/>
<text x="1680.3" y="708.8" font-size="12.0" fill="#f0f0f0" text-anchor="middle" textLength="14.5" lengthAdjust="spacingAndGlyphs" >90</text>
<rect x="1765.0" y="586.0" width="128.0" height="54.0" fill="#fffefa" shape-rendering="crispEdges"/>
<rect x="1765.0" y="640.0" width="128.0" height="53.0" fill="#ffffff" shape-rendering="crispEdges"/>
<rect x="1766.1" y="586.3" width="126.4" height="106.4" fill="none" stroke="#f4f4f4" stroke-width="1.6"/>
<text x="1829.3" y="708.8" font-size="12.0" fill="#f0f0f0" text-anchor="middle" textLength="21.5" lengthAdjust="spacingAndGlyphs" >100</text>
<text transform="translate(265,628) rotate(-90)" font-size="12" fill="#f0f0f0" textLength="37" lengthAdjust="spacingAndGlyphs">Actual</text>
<text transform="translate(265,689) rotate(-90)" font-size="12" fill="#f0f0f0" textLength="37" lengthAdjust="spacingAndGlyphs">Target</text>
<text x="172.7" y="788.0" font-size="29.4" fill="#f2f2f2" textLength="232.0" lengthAdjust="spacingAndGlyphs" >Current Reading</text>
<text x="172.7" y="833.4" font-size="27.0" fill="#f2f2f2" textLength="108.1" lengthAdjust="spacingAndGlyphs" >x: 0.3154</text>
<text x="331.4" y="833.4" font-size="27.0" fill="#f2f2f2" textLength="108.9" lengthAdjust="spacingAndGlyphs" >y: 0.3328</text>
<text x="172.7" y="869.3" font-size="27.0" fill="#f2f2f2" textLength="117.5" lengthAdjust="spacingAndGlyphs" >u': 0.1983</text>
<text x="331.4" y="869.3" font-size="27.0" fill="#f2f2f2" textLength="115.2" lengthAdjust="spacingAndGlyphs" >v': 0.4708</text>
<text x="172.7" y="905.6" font-size="27.0" fill="#f2f2f2" textLength="198.2" lengthAdjust="spacingAndGlyphs" >cd/m²: 378.6101</text>
<text x="172.7" y="941.9" font-size="27.0" fill="#f2f2f2" textLength="162.9" lengthAdjust="spacingAndGlyphs" >ΔE 2000: 2.03</text>
<text x="612.3" y="753.1" font-size="14.0" fill="#dcdcdc" textLength="79.6" lengthAdjust="spacingAndGlyphs" >CIE 1931 xy</text>
<clipPath id="cclip"><rect x="536.6" y="758.4" width="267.6" height="175.9"/></clipPath>
<g clip-path="url(#cclip)"><g filter="url(#cblur)"><rect x="529" y="750" width="8.5" height="8.5" fill="#67ffc7"/><rect x="537" y="750" width="8.5" height="8.5" fill="#6dffc7"/><rect x="545" y="750" width="8.5" height="8.5" fill="#73ffc7"/><rect x="553" y="750" width="8.5" height="8.5" fill="#79ffc6"/><rect x="561" y="750" width="8.5" height="8.5" fill="#7fffc6"/><rect x="569" y="750" width="8.5" height="8.5" fill="#85ffc6"/><rect x="577" y="750" width="8.5" height="8.5" fill="#8affc6"/><rect x="585" y="750" width="8.5" height="8.5" fill="#90ffc5"/><rect x="593" y="750" width="8.5" height="8.5" fill="#96ffc5"/><rect x="601" y="750" width="8.5" height="8.5" fill="#9bffc5"/><rect x="609" y="750" width="8.5" height="8.5" fill="#a1ffc5"/><rect x="617" y="750" width="8.5" height="8.5" fill="#a6ffc5"/><rect x="625" y="750" width="8.5" height="8.5" fill="#acffc4"/><rect x="633" y="750" width="8.5" height="8.5" fill="#b1ffc4"/><rect x="641" y="750" width="8.5" height="8.5" fill="#b7ffc4"/><rect x="649" y="750" width="8.5" height="8.5" fill="#bcffc4"/><rect x="657" y="750" width="8.5" height="8.5" fill="#c1ffc3"/><rect x="665" y="750" width="8.5" height="8.5" fill="#c7ffc3"/><rect x="673" y="750" width="8.5" height="8.5" fill="#ccffc3"/><rect x="681" y="750" width="8.5" height="8.5" fill="#d1ffc3"/><rect x="689" y="750" width="8.5" height="8.5" fill="#d6ffc2"/><rect x="697" y="750" width="8.5" height="8.5" fill="#dcffc2"/><rect x="705" y="750" width="8.5" height="8.5" fill="#e1ffc2"/><rect x="713" y="750" width="8.5" height="8.5" fill="#e6ffc2"/><rect x="721" y="750" width="8.5" height="8.5" fill="#ebffc1"/><rect x="729" y="750" width="8.5" height="8.5" fill="#f0ffc1"/><rect x="737" y="750" width="8.5" height="8.5" fill="#f5ffc1"/><rect x="745" y="750" width="8.5" height="8.5" fill="#faffc0"/><rect x="753" y="750" width="8.5" height="8.5" fill="#ffffc0"/><rect x="761" y="750" width="8.5" height="8.5" fill="#fffabb"/><rect x="769" y="750" width="8.5" height="8.5" fill="#fff5b6"/><rect x="777" y="750" width="8.5" height="8.5" fill="#fff0b2"/><rect x="785" y="750" width="8.5" height="8.5" fill="#ffebad"/><rect x="793" y="750" width="8.5" height="8.5" fill="#ffe6a9"/><rect x="801" y="750" width="8.5" height="8.5" fill="#ffe2a4"/><rect x="809" y="750" width="8.5" height="8.5" fill="#ffdda0"/><rect x="529" y="758" width="8.5" height="8.5" fill="#6bffcb"/><rect x="537" y="758" width="8.5" height="8.5" fill="#71ffcb"/><rect x="545" y="758" width="8.5" height="8.5" fill="#77ffcb"/><rect x="553" y="758" width="8.5" height="8.5" fill="#7dffcb"/><rect x="561" y="758" width="8.5" height="8.5" fill="#83ffcb"/><rect x="569" y="758" width="8.5" height="8.5" fill="#89ffca"/><rect x="577" y="758" width="8.5" height="8.5" fill="#8fffca"/><rect x="585" y="758" width="8.5" height="8.5" fill="#94ffca"/><rect x="593" y="758" width="8.5" height="8.5" fill="#9affca"/><rect x="601" y="758" width="8.5" height="8.5" fill="#9fffca"/><rect x="609" y="758" width="8.5" height="8.5" fill="#a5ffc9"/><rect x="617" y="758" width="8.5" height="8.5" fill="#abffc9"/><rect x="625" y="758" width="8.5" height="8.5" fill="#b0ffc9"/><rect x="633" y="758" width="8.5" height="8.5" fill="#b5ffc9"/><rect x="641" y="758" width="8.5" height="8.5" fill="#bbffc9"/><rect x="649" y="758" width="8.5" height="8.5" fill="#c0ffc8"/><rect x="657" y="758" width="8.5" height="8.5" fill="#c6ffc8"/><rect x="665" y="758" width="8.5" height="8.5" fill="#cbffc8"/><rect x="673" y="758" width="8.5" height="8.5" fill="#d0ffc8"/><rect x="681" y="758" width="8.5" height="8.5" fill="#d6ffc7"/><rect x="689" y="758" width="8.5" height="8.5" fill="#dbffc7"/><rect x="697" y="758" width="8.5" height="8.5" fill="#e0ffc7"/><rect x="705" y="758" width="8.5" height="8.5" fill="#e5ffc7"/><rect x="713" y="758" width="8.5" height="8.5" fill="#eaffc6"/><rect x="721" y="758" width="8.5" height="8.5" fill="#f0ffc6"/><rect x="729" y="758" width="8.5" height="8.5" fill="#f5ffc6"/><rect x="737" y="758" width="8.5" height="8.5" fill="#faffc6"/><rect x="745" y="758" width="8.5" height="8.5" fill="#ffffc5"/><rect x="753" y="758" width="8.5" height="8.5" fill="#fffac1"/><rect x="761" y="758" width="8.5" height="8.5" fill="#fff5bc"/><rect x="769" y="758" width="8.5" height="8.5" fill="#fff0b7"/><rect x="777" y="758" width="8.5" height="8.5" fill="#ffebb3"/><rect x="785" y="758" width="8.5" height="8.5" fill="#ffe7ae"/><rect x="793" y="758" width="8.5" height="8.5" fill="#ffe2aa"/><rect x="801" y="758" width="8.5" height="8.5" fill="#ffdda5"/><rect x="809" y="758" width="8.5" height="8.5" fill="#ffd9a1"/><rect x="529" y="766" width="8.5" height="8.5" fill="#70ffd0"/><rect x="537" y="766" width="8.5" height="8.5" fill="#76ffd0"/><rect x="545" y="766" width="8.5" height="8.5" fill="#7cffd0"/><rect x="553" y="766" width="8.5" height="8.5" fill="#81ffcf"/><rect x="561" y="766" width="8.5" height="8.5" fill="#87ffcf"/><rect x="569" y="766" width="8.5" height="8.5" fill="#8dffcf"/><rect x="577" y="766" width="8.5" height="8.5" fill="#93ffcf"/><rect x="585" y="766" width="8.5" height="8.5" fill="#99ffcf"/><rect x="593" y="766" width="8.5" height="8.5" fill="#9effcf"/><rect x="601" y="766" width="8.5" height="8.5" fill="#a4ffce"/><rect x="609" y="766" width="8.5" height="8.5" fill="#a9ffce"/><rect x="617" y="766" width="8.5" height="8.5" fill="#afffce"/><rect x="625" y="766" width="8.5" height="8.5" fill="#b4ffce"/><rect x="633" y="766" width="8.5" height="8.5" fill="#baffce"/><rect x="641" y="766" width="8.5" height="8.5" fill="#bfffcd"/><rect x="649" y="766" width="8.5" height="8.5" fill="#c5ffcd"/><rect x="657" y="766" width="8.5" height="8.5" fill="#caffcd"/><rect x="665" y="766" width="8.5" height="8.5" fill="#cfffcd"/><rect x="673" y="766" width="8.5" height="8.5" fill="#d5ffcd"/><rect x="681" y="766" width="8.5" height="8.5" fill="#daffcc"/><rect x="689" y="766" width="8.5" height="8.5" fill="#dfffcc"/><rect x="697" y="766" width="8.5" height="8.5" fill="#e5ffcc"/><rect x="705" y="766" width="8.5" height="8.5" fill="#eaffcc"/><rect x="713" y="766" width="8.5" height="8.5" fill="#efffcb"/><rect x="721" y="766" width="8.5" height="8.5" fill="#f4ffcb"/><rect x="729" y="766" width="8.5" height="8.5" fill="#f9ffcb"/><rect x="737" y="766" width="8.5" height="8.5" fill="#ffffcb"/><rect x="745" y="766" width="8.5" height="8.5" fill="#fffac6"/><rect x="753" y="766" width="8.5" height="8.5" fill="#fff5c1"/><rect x="761" y="766" width="8.5" height="8.5" fill="#fff0bd"/><rect x="769" y="766" width="8.5" height="8.5" fill="#ffecb8"/><rect x="777" y="766" width="8.5" height="8.5" fill="#ffe7b4"/><rect x="785" y="766" width="8.5" height="8.5" fill="#ffe2af"/><rect x="793" y="766" width="8.5" height="8.5" fill="#ffdeab"/><rect x="801" y="766" width="8.5" height="8.5" fill="#ffd9a6"/><rect x="809" y="766" width="8.5" height="8.5" fill="#ffd5a2"/><rect x="529" y="774" width="8.5" height="8.5" fill="#74ffd5"/><rect x="537" y="774" width="8.5" height="8.5" fill="#7affd4"/><rect x="545" y="774" width="8.5" height="8.5" fill="#80ffd4"/><rect x="553" y="774" width="8.5" height="8.5" fill="#86ffd4"/><rect x="561" y="774" width="8.5" height="8.5" fill="#8cffd4"/><rect x="569" y="774" width="8.5" height="8.5" fill="#91ffd4"/><rect x="577" y="774" width="8.5" height="8.5" fill="#97ffd4"/><rect x="585" y="774" width="8.5" height="8.5" fill="#9dffd3"/><rect x="593" y="774" width="8.5" height="8.5" fill="#a3ffd3"/><rect x="601" y="774" width="8.5" height="8.5" fill="#a8ffd3"/><rect x="609" y="774" width="8.5" height="8.5" fill="#aeffd3"/><rect x="617" y="774" width="8.5" height="8.5" fill="#b3ffd3"/><rect x="625" y="774" width="8.5" height="8.5" fill="#b9ffd3"/><rect x="633" y="774" width="8.5" height="8.5" fill="#beffd2"/><rect x="641" y="774" width="8.5" height="8.5" fill="#c4ffd2"/><rect x="649" y="774" width="8.5" height="8.5" fill="#c9ffd2"/><rect x="657" y="774" width="8.5" height="8.5" fill="#cfffd2"/><rect x="665" y="774" width="8.5" height="8.5" fill="#d4ffd2"/><rect x="673" y="774" width="8.5" height="8.5" fill="#d9ffd1"/><rect x="681" y="774" width="8.5" height="8.5" fill="#dfffd1"/><rect x="689" y="774" width="8.5" height="8.5" fill="#e4ffd1"/><rect x="697" y="774" width="8.5" height="8.5" fill="#e9ffd1"/><rect x="705" y="774" width="8.5" height="8.5" fill="#eeffd1"/><rect x="713" y="774" width="8.5" height="8.5" fill="#f4ffd1"/><rect x="721" y="774" width="8.5" height="8.5" fill="#f9ffd0"/><rect x="729" y="774" width="8.5" height="8.5" fill="#feffd0"/><rect x="737" y="774" width="8.5" height="8.5" fill="#fffbcc"/><rect x="745" y="774" width="8.5" height="8.5" fill="#fff6c7"/><rect x="753" y="774" width="8.5" height="8.5" fill="#fff1c2"/><rect x="761" y="774" width="8.5" height="8.5" fill="#ffecbe"/><rect x="769" y="774" width="8.5" height="8.5" fill="#ffe7b9"/><rect x="777" y="774" width="8.5" height="8.5" fill="#ffe2b4"/><rect x="785" y="774" width="8.5" height="8.5" fill="#ffdeb0"/><rect x="793" y="774" width="8.5" height="8.5" fill="#ffd9ac"/><rect x="801" y="774" width="8.5" height="8.5" fill="#ffd5a7"/><rect x="809" y="774" width="8.5" height="8.5" fill="#ffd0a3"/><rect x="529" y="782" width="8.5" height="8.5" fill="#78ffd9"/><rect x="537" y="782" width="8.5" height="8.5" fill="#7effd9"/><rect x="545" y="782" width="8.5" height="8.5" fill="#84ffd9"/><rect x="553" y="782" width="8.5" height="8.5" fill="#8affd9"/><rect x="561" y="782" width="8.5" height="8.5" fill="#90ffd9"/><rect x="569" y="782" width="8.5" height="8.5" fill="#96ffd9"/><rect x="577" y="782" width="8.5" height="8.5" fill="#9cffd8"/><rect x="585" y="782" width="8.5" height="8.5" fill="#a1ffd8"/><rect x="593" y="782" width="8.5" height="8.5" fill="#a7ffd8"/><rect x="601" y="782" width="8.5" height="8.5" fill="#adffd8"/><rect x="609" y="782" width="8.5" height="8.5" fill="#b2ffd8"/><rect x="617" y="782" width="8.5" height="8.5" fill="#b8ffd8"/><rect x="625" y="782" width="8.5" height="8.5" fill="#bdffd7"/><rect x="633" y="782" width="8.5" height="8.5" fill="#c3ffd7"/><rect x="641" y="782" width="8.5" height="8.5" fill="#c8ffd7"/><rect x="649" y="782" width="8.5" height="8.5" fill="#ceffd7"/><rect x="657" y="782" width="8.5" height="8.5" fill="#d3ffd7"/><rect x="665" y="782" width="8.5" height="8.5" fill="#d9ffd7"/><rect x="673" y="782" width="8.5" height="8.5" fill="#deffd6"/><rect x="681" y="782" width="8.5" height="8.5" fill="#e3ffd6"/><rect x="689" y="782" width="8.5" height="8.5" fill="#e9ffd6"/><rect x="697" y="782" width="8.5" height="8.5" fill="#eeffd6"/><rect x="705" y="782" width="8.5" height="8.5" fill="#f3ffd6"/><rect x="713" y="782" width="8.5" height="8.5" fill="#f8ffd6"/><rect x="721" y="782" width="8.5" height="8.5" fill="#feffd5"/><rect x="729" y="782" width="8.5" height="8.5" fill="#fffbd2"/><rect x="737" y="782" width="8.5" height="8.5" fill="#fff6cd"/><rect x="745" y="782" width="8.5" height="8.5" fill="#fff1c8"/><rect x="753" y="782" width="8.5" height="8.5" fill="#ffecc3"/><rect x="761" y="782" width="8.5" height="8.5" fill="#ffe7be"/><rect x="769" y="782" width="8.5" height="8.5" fill="#ffe3ba"/><rect x="777" y="782" width="8.5" height="8.5" fill="#ffdeb5"/><rect x="785" y="782" width="8.5" height="8.5" fill="#ffd9b1"/><rect x="793" y="782" width="8.5" height="8.5" fill="#ffd5ad"/><rect x="801" y="782" width="8.5" height="8.5" fill="#ffd0a8"/><rect x="809" y="782" width="8.5" height="8.5" fill="#ffcca4"/><rect x="529" y="790" width="8.5" height="8.5" fill="#7dffde"/><rect x="537" y="790" width="8.5" height="8.5" fill="#83ffde"/><rect x="545" y="790" width="8.5" height="8.5" fill="#89ffde"/><rect x="553" y="790" width="8.5" height="8.5" fill="#8fffde"/><rect x="561" y="790" width="8.5" height="8.5" fill="#94ffdd"/><rect x="569" y="790" width="8.5" height="8.5" fill="#9affdd"/><rect x="577" y="790" width="8.5" height="8.5" fill="#a0ffdd"/><rect x="585" y="790" width="8.5" height="8.5" fill="#a6ffdd"/><rect x="593" y="790" width="8.5" height="8.5" fill="#abffdd"/><rect x="601" y="790" width="8.5" height="8.5" fill="#b1ffdd"/><rect x="609" y="790" width="8.5" height="8.5" fill="#b7ffdd"/><rect x="617" y="790" width="8.5" height="8.5" fill="#bcffdd"/><rect x="625" y="790" width="8.5" height="8.5" fill="#c2ffdc"/><rect x="633" y="790" width="8.5" height="8.5" fill="#c7ffdc"/><rect x="641" y="790" width="8.5" height="8.5" fill="#cdffdc"/><rect x="649" y="790" width="8.5" height="8.5" fill="#d2ffdc"/><rect x="657" y="790" width="8.5" height="8.5" fill="#d8ffdc"/><rect x="665" y="790" width="8.5" height="8.5" fill="#ddffdc"/><rect x="673" y="790" width="8.5" height="8.5" fill="#e3ffdc"/><rect x="681" y="790" width="8.5" height="8.5" fill="#e8ffdb"/><rect x="689" y="790" width="8.5" height="8.5" fill="#edffdb"/><rect x="697" y="790" width="8.5" height="8.5" fill="#f3ffdb"/><rect x="705" y="790" width="8.5" height="8.5" fill="#f8ffdb"/><rect x="713" y="790" width="8.5" height="8.5" fill="#fdffdb"/><rect x="721" y="790" width="8.5" height="8.5" fill="#fffcd7"/><rect x="729" y="790" width="8.5" height="8.5" fill="#fff6d2"/><rect x="737" y="790" width="8.5" height="8.5" fill="#fff1cd"/><rect x="745" y="790" width="8.5" height="8.5" fill="#ffecc9"/><rect x="753" y="790" width="8.5" height="8.5" fill="#ffe8c4"/><rect x="761" y="790" width="8.5" height="8.5" fill="#ffe3bf"/><rect x="769" y="790" width="8.5" height="8.5" fill="#ffdebb"/><rect x="777" y="790" width="8.5" height="8.5" fill="#ffd9b6"/><rect x="785" y="790" width="8.5" height="8.5" fill="#ffd5b2"/><rect x="793" y="790" width="8.5" height="8.5" fill="#ffd1ae"/><rect x="801" y="790" width="8.5" height="8.5" fill="#ffcca9"/><rect x="809" y="790" width="8.5" height="8.5" fill="#ffc8a5"/><rect x="529" y="798" width="8.5" height="8.5" fill="#81ffe3"/><rect x="537" y="798" width="8.5" height="8.5" fill="#87ffe3"/><rect x="545" y="798" width="8.5" height="8.5" fill="#8dffe2"/><rect x="553" y="798" width="8.5" height="8.5" fill="#93ffe2"/><rect x="561" y="798" width="8.5" height="8.5" fill="#99ffe2"/><rect x="569" y="798" width="8.5" height="8.5" fill="#9fffe2"/><rect x="577" y="798" width="8.5" height="8.5" fill="#a5ffe2"/><rect x="585" y="798" width="8.5" height="8.5" fill="#aaffe2"/><rect x="593" y="798" width="8.5" height="8.5" fill="#b0ffe2"/><rect x="601" y="798" width="8.5" height="8.5" fill="#b6ffe2"/><rect x="609" y="798" width="8.5" height="8.5" fill="#bbffe2"/><rect x="617" y="798" width="8.5" height="8.5" fill="#c1ffe1"/><rect x="625" y="798" width="8.5" height="8.5" fill="#c6ffe1"/><rect x="633" y="798" width="8.5" height="8.5" fill="#ccffe1"/><rect x="641" y="798" width="8.5" height="8.5" fill="#d2ffe1"/><rect x="649" y="798" width="8.5" height="8.5" fill="#d7ffe1"/><rect x="657" y="798" width="8.5" height="8.5" fill="#dcffe1"/><rect x="665" y="798" width="8.5" height="8.5" fill="#e2ffe1"/><rect x="673" y="798" width="8.5" height="8.5" fill="#e7ffe1"/><rect x="681" y="798" width="8.5" height="8.5" fill="#edffe1"/><rect x="689" y="798" width="8.5" height="8.5" fill="#f2ffe0"/><rect x="697" y="798" width="8.5" height="8.5" fill="#f7ffe0"/><rect x="705" y="798" width="8.5" height="8.5" fill="#fdffe0"/><rect x="713" y="798" width="8.5" height="8.5" fill="#fffcdd"/><rect x="721" y="798" width="8.5" height="8.5" fill="#fff7d8"/><rect x="729" y="798" width="8.5" height="8.5" fill="#fff2d3"/><rect x="737" y="798" width="8.5" height="8.5" fill="#ffedce"/><rect x="745" y="798" width="8.5" height="8.5" fill="#ffe8c9"/><rect x="753" y="798" width="8.5" height="8.5" fill="#ffe3c5"/><rect x="761" y="798" width="8.5" height="8.5" fill="#ffdec0"/><rect x="769" y="798" width="8.5" height="8.5" fill="#ffdabc"/><rect x="777" y="798" width="8.5" height="8.5" fill="#ffd5b7"/><rect x="785" y="798" width="8.5" height="8.5" fill="#ffd1b3"/><rect x="793" y="798" width="8.5" height="8.5" fill="#ffccae"/><rect x="801" y="798" width="8.5" height="8.5" fill="#ffc8aa"/><rect x="809" y="798" width="8.5" height="8.5" fill="#ffc4a6"/><rect x="529" y="806" width="8.5" height="8.5" fill="#86ffe7"/><rect x="537" y="806" width="8.5" height="8.5" fill="#8cffe7"/><rect x="545" y="806" width="8.5" height="8.5" fill="#92ffe7"/><rect x="553" y="806" width="8.5" height="8.5" fill="#98ffe7"/><rect x="561" y="806" width="8.5" height="8.5" fill="#9dffe7"/><rect x="569" y="806" width="8.5" height="8.5" fill="#a3ffe7"/><rect x="577" y="806" width="8.5" height="8.5" fill="#a9ffe7"/><rect x="585" y="806" width="8.5" height="8.5" fill="#afffe7"/><rect x="593" y="806" width="8.5" height="8.5" fill="#b5ffe7"/><rect x="601" y="806" width="8.5" height="8.5" fill="#baffe7"/><rect x="609" y="806" width="8.5" height="8.5" fill="#c0ffe7"/><rect x="617" y="806" width="8.5" height="8.5" fill="#c6ffe6"/><rect x="625" y="806" width="8.5" height="8.5" fill="#cbffe6"/><rect x="633" y="806" width="8.5" height="8.5" fill="#d1ffe6"/><rect x="641" y="806" width="8.5" height="8.5" fill="#d6ffe6"/><rect x="649" y="806" width="8.5" height="8.5" fill="#dcffe6"/><rect x="657" y="806" width="8.5" height="8.5" fill="#e1ffe6"/><rect x="665" y="806" width="8.5" height="8.5" fill="#e7ffe6"/><rect x="673" y="806" width="8.5" height="8.5" fill="#ecffe6"/><rect x="681" y="806" width="8.5" height="8.5" fill="#f1ffe6"/><rect x="689" y="806" width="8.5" height="8.5" fill="#f7ffe6"/><rect x="697" y="806" width="8.5" height="8.5" fill="#fcffe5"/><rect x="705" y="806" width="8.5" height="8.5" fill="#fffce3"/><rect x="713" y="806" width="8.5" height="8.5" fill="#fff7de"/><rect x="721" y="806" width="8.5" height="8.5" fill="#fff2d9"/><rect x="729" y="806" width="8.5" height="8.5" fill="#ffedd4"/><rect x="737" y="806" width="8.5" height="8.5" fill="#ffe8cf"/><rect x="745" y="806" width="8.5" height="8.5" fill="#ffe3ca"/><rect x="753" y="806" width="8.5" height="8.5" fill="#ffdec5"/><rect x="761" y="806" width="8.5" height="8.5" fill="#ffdac1"/><rect x="769" y="806" width="8.5" height="8.5" fill="#ffd5bc"/><rect x="777" y="806" width="8.5" height="8.5" fill="#ffd1b8"/><rect x="785" y="806" width="8.5" height="8.5" fill="#ffccb4"/><rect x="793" y="806" width="8.5" height="8.5" fill="#ffc8af"/><rect x="801" y="806" width="8.5" height="8.5" fill="#ffc4ab"/><rect x="809" y="806" width="8.5" height="8.5" fill="#ffbfa7"/><rect x="529" y="814" width="8.5" height="8.5" fill="#8affec"/><rect x="537" y="814" width="8.5" height="8.5" fill="#90ffec"/><rect x="545" y="814" width="8.5" height="8.5" fill="#96ffec"/><rect x="553" y="814" width="8.5" height="8.5" fill="#9cffec"/><rect x="561" y="814" width="8.5" height="8.5" fill="#a2ffec"/><rect x="569" y="814" width="8.5" height="8.5" fill="#a8ffec"/><rect x="577" y="814" width="8.5" height="8.5" fill="#aeffec"/><rect x="585" y="814" width="8.5" height="8.5" fill="#b3ffec"/><rect x="593" y="814" width="8.5" height="8.5" fill="#b9ffec"/><rect x="601" y="814" width="8.5" height="8.5" fill="#bfffec"/><rect x="609" y="814" width="8.5" height="8.5" fill="#c5ffec"/><rect x="617" y="814" width="8.5" height="8.5" fill="#caffec"/><rect x="625" y="814" width="8.5" height="8.5" fill="#d0ffeb"/><rect x="633" y="814" width="8.5" height="8.5" fill="#d5ffeb"/><rect x="641" y="814" width="8.5" height="8.5" fill="#dbffeb"/><rect x="649" y="814" width="8.5" height="8.5" fill="#e0ffeb"/><rect x="657" y="814" width="8.5" height="8.5" fill="#e6ffeb"/><rect x="665" y="814" width="8.5" height="8.5" fill="#ebffeb"/><rect x="673" y="814" width="8.5" height="8.5" fill="#f1ffeb"/><rect x="681" y="814" width="8.5" height="8.5" fill="#f6ffeb"/><rect x="689" y="814" width="8.5" height="8.5" fill="#fcffeb"/><rect x="697" y="814" width="8.5" height="8.5" fill="#fffde9"/><rect x="705" y="814" width="8.5" height="8.5" fill="#fff8e3"/><rect x="713" y="814" width="8.5" height="8.5" fill="#fff2de"/><rect x="721" y="814" width="8.5" height="8.5" fill="#ffedd9"/><rect x="729" y="814" width="8.5" height="8.5" fill="#ffe8d4"/><rect x="737" y="814" width="8.5" height="8.5" fill="#ffe3d0"/><rect x="745" y="814" width="8.5" height="8.5" fill="#ffdfcb"/><rect x="753" y="814" width="8.5" height="8.5" fill="#ffdac6"/><rect x="761" y="814" width="8.5" height="8.5" fill="#ffd5c2"/><rect x="769" y="814" width="8.5" height="8.5" fill="#ffd1bd"/><rect x="777" y="814" width="8.5" height="8.5" fill="#ffccb9"/><rect x="785" y="814" width="8.5" height="8.5" fill="#ffc8b4"/><rect x="793" y="814" width="8.5" height="8.5" fill="#ffc3b0"/><rect x="801" y="814" width="8.5" height="8.5" fill="#ffbfac"/><rect x="809" y="814" width="8.5" height="8.5" fill="#ffbba8"/><rect x="529" y="822" width="8.5" height="8.5" fill="#8ffff1"/><rect x="537" y="822" width="8.5" height="8.5" fill="#95fff1"/><rect x="545" y="822" width="8.5" height="8.5" fill="#9bfff1"/><rect x="553" y="822" width="8.5" height="8.5" fill="#a1fff1"/><rect x="561" y="822" width="8.5" height="8.5" fill="#a7fff1"/><rect x="569" y="822" width="8.5" height="8.5" fill="#acfff1"/><rect x="577" y="822" width="8.5" height="8.5" fill="#b2fff1"/><rect x="585" y="822" width="8.5" height="8.5" fill="#b8fff1"/><rect x="593" y="822" width="8.5" height="8.5" fill="#befff1"/><rect x="601" y="822" width="8.5" height="8.5" fill="#c4fff1"/><rect x="609" y="822" width="8.5" height="8.5" fill="#c9fff1"/><rect x="617" y="822" width="8.5" height="8.5" fill="#cffff1"/><rect x="625" y="822" width="8.5" height="8.5" fill="#d5fff1"/><rect x="633" y="822" width="8.5" height="8.5" fill="#dafff1"/><rect x="641" y="822" width="8.5" height="8.5" fill="#e0fff1"/><rect x="649" y="822" width="8.5" height="8.5" fill="#e5fff0"/><rect x="657" y="822" width="8.5" height="8.5" fill="#ebfff0"/><rect x="665" y="822" width="8.5" height="8.5" fill="#f0fff0"/><rect x="673" y="822" width="8.5" height="8.5" fill="#f6fff0"/><rect x="681" y="822" width="8.5" height="8.5" fill="#fbfff0"/><rect x="689" y="822" width="8.5" height="8.5" fill="#fffdef"/><rect x="697" y="822" width="8.5" height="8.5" fill="#fff8e9"/><rect x="705" y="822" width="8.5" height="8.5" fill="#fff3e4"/><rect x="713" y="822" width="8.5" height="8.5" fill="#ffeedf"/><rect x="721" y="822" width="8.5" height="8.5" fill="#ffe9da"/><rect x="729" y="822" width="8.5" height="8.5" fill="#ffe4d5"/><rect x="737" y="822" width="8.5" height="8.5" fill="#ffdfd0"/><rect x="745" y="822" width="8.5" height="8.5" fill="#ffdacc"/><rect x="753" y="822" width="8.5" height="8.5" fill="#ffd5c7"/><rect x="761" y="822" width="8.5" height="8.5" fill="#ffd1c2"/><rect x="769" y="822" width="8.5" height="8.5" fill="#ffccbe"/><rect x="777" y="822" width="8.5" height="8.5" fill="#ffc8ba"/><rect x="785" y="822" width="8.5" height="8.5" fill="#ffc3b5"/><rect x="793" y="822" width="8.5" height="8.5" fill="#ffbfb1"/><rect x="801" y="822" width="8.5" height="8.5" fill="#ffbbad"/><rect x="809" y="822" width="8.5" height="8.5" fill="#ffb7a9"/><rect x="529" y="830" width="8.5" height="8.5" fill="#93fff6"/><rect x="537" y="830" width="8.5" height="8.5" fill="#99fff6"/><rect x="545" y="830" width="8.5" height="8.5" fill="#9ffff6"/><rect x="553" y="830" width="8.5" height="8.5" fill="#a5fff6"/><rect x="561" y="830" width="8.5" height="8.5" fill="#abfff6"/><rect x="569" y="830" width="8.5" height="8.5" fill="#b1fff6"/><rect x="577" y="830" width="8.5" height="8.5" fill="#b7fff6"/><rect x="585" y="830" width="8.5" height="8.5" fill="#bdfff6"/><rect x="593" y="830" width="8.5" height="8.5" fill="#c3fff6"/><rect x="601" y="830" width="8.5" height="8.5" fill="#c8fff6"/><rect x="609" y="830" width="8.5" height="8.5" fill="#cefff6"/><rect x="617" y="830" width="8.5" height="8.5" fill="#d4fff6"/><rect x="625" y="830" width="8.5" height="8.5" fill="#d9fff6"/><rect x="633" y="830" width="8.5" height="8.5" fill="#dffff6"/><rect x="641" y="830" width="8.5" height="8.5" fill="#e5fff6"/><rect x="649" y="830" width="8.5" height="8.5" fill="#eafff6"/><rect x="657" y="830" width="8.5" height="8.5" fill="#f0fff6"/><rect x="665" y="830" width="8.5" height="8.5" fill="#f5fff6"/><rect x="673" y="830" width="8.5" height="8.5" fill="#fbfff6"/><rect x="681" y="830" width="8.5" height="8.5" fill="#fffef4"/><rect x="689" y="830" width="8.5" height="8.5" fill="#fff8ef"/><rect x="697" y="830" width="8.5" height="8.5" fill="#fff3ea"/><rect x="705" y="830" width="8.5" height="8.5" fill="#ffeee5"/><rect x="713" y="830" width="8.5" height="8.5" fill="#ffe9e0"/><rect x="721" y="830" width="8.5" height="8.5" fill="#ffe4db"/><rect x="729" y="830" width="8.5" height="8.5" fill="#ffdfd6"/><rect x="737" y="830" width="8.5" height="8.5" fill="#ffdad1"/><rect x="745" y="830" width="8.5" height="8.5" fill="#ffd5cc"/><rect x="753" y="830" width="8.5" height="8.5" fill="#ffd1c8"/><rect x="761" y="830" width="8.5" height="8.5" fill="#ffccc3"/><rect x="769" y="830" width="8.5" height="8.5" fill="#ffc8bf"/><rect x="777" y="830" width="8.5" height="8.5" fill="#ffc3ba"/><rect x="785" y="830" width="8.5" height="8.5" fill="#ffbfb6"/><rect x="793" y="830" width="8.5" height="8.5" fill="#ffbbb2"/><rect x="801" y="830" width="8.5" height="8.5" fill="#ffb7ae"/><rect x="809" y="830" width="8.5" height="8.5" fill="#ffb2aa"/><rect x="529" y="838" width="8.5" height="8.5" fill="#98fffb"/><rect x="537" y="838" width="8.5" height="8.5" fill="#9efffb"/><rect x="545" y="838" width="8.5" height="8.5" fill="#a4fffb"/><rect x="553" y="838" width="8.5" height="8.5" fill="#aafffb"/><rect x="561" y="838" width="8.5" height="8.5" fill="#b0fffb"/><rect x="569" y="838" width="8.5" height="8.5" fill="#b6fffb"/><rect x="577" y="838" width="8.5" height="8.5" fill="#bcfffb"/><rect x="585" y="838" width="8.5" height="8.5" fill="#c2fffb"/><rect x="593" y="838" width="8.5" height="8.5" fill="#c7fffb"/><rect x="601" y="838" width="8.5" height="8.5" fill="#cdfffb"/><rect x="609" y="838" width="8.5" height="8.5" fill="#d3fffb"/><rect x="617" y="838" width="8.5" height="8.5" fill="#d9fffb"/><rect x="625" y="838" width="8.5" height="8.5" fill="#defffb"/><rect x="633" y="838" width="8.5" height="8.5" fill="#e4fffb"/><rect x="641" y="838" width="8.5" height="8.5" fill="#eafffb"/><rect x="649" y="838" width="8.5" height="8.5" fill="#effffb"/><rect x="657" y="838" width="8.5" height="8.5" fill="#f5fffb"/><rect x="665" y="838" width="8.5" height="8.5" fill="#fafffb"/><rect x="673" y="838" width="8.5" height="8.5" fill="#fffefa"/><rect x="681" y="838" width="8.5" height="8.5" fill="#fff9f5"/><rect x="689" y="838" width="8.5" height="8.5" fill="#fff3f0"/><rect x="697" y="838" width="8.5" height="8.5" fill="#ffeeea"/><rect x="705" y="838" width="8.5" height="8.5" fill="#ffe9e5"/><rect x="713" y="838" width="8.5" height="8.5" fill="#ffe4e0"/><rect x="721" y="838" width="8.5" height="8.5" fill="#ffdfdb"/><rect x="729" y="838" width="8.5" height="8.5" fill="#ffdad6"/><rect x="737" y="838" width="8.5" height="8.5" fill="#ffd5d2"/><rect x="745" y="838" width="8.5" height="8.5" fill="#ffd1cd"/><rect x="753" y="838" width="8.5" height="8.5" fill="#ffccc9"/><rect x="761" y="838" width="8.5" height="8.5" fill="#ffc8c4"/><rect x="769" y="838" width="8.5" height="8.5" fill="#ffc3c0"/><rect x="777" y="838" width="8.5" height="8.5" fill="#ffbfbb"/><rect x="785" y="838" width="8.5" height="8.5" fill="#ffbbb7"/><rect x="793" y="838" width="8.5" height="8.5" fill="#ffb6b3"/><rect x="801" y="838" width="8.5" height="8.5" fill="#ffb2af"/><rect x="809" y="838" width="8.5" height="8.5" fill="#ffaeab"/><rect x="529" y="846" width="8.5" height="8.5" fill="#9cfeff"/><rect x="537" y="846" width="8.5" height="8.5" fill="#a2feff"/><rect x="545" y="846" width="8.5" height="8.5" fill="#a8feff"/><rect x="553" y="846" width="8.5" height="8.5" fill="#aefeff"/><rect x="561" y="846" width="8.5" height="8.5" fill="#b4feff"/><rect x="569" y="846" width="8.5" height="8.5" fill="#b9feff"/><rect x="577" y="846" width="8.5" height="8.5" fill="#bffeff"/><rect x="585" y="846" width="8.5" height="8.5" fill="#c5feff"/><rect x="593" y="846" width="8.5" height="8.5" fill="#cbfeff"/><rect x="601" y="846" width="8.5" height="8.5" fill="#d1feff"/><rect x="609" y="846" width="8.5" height="8.5" fill="#d6feff"/><rect x="617" y="846" width="8.5" height="8.5" fill="#dcfeff"/><rect x="625" y="846" width="8.5" height="8.5" fill="#e2feff"/><rect x="633" y="846" width="8.5" height="8.5" fill="#e7feff"/><rect x="641" y="846" width="8.5" height="8.5" fill="#edfeff"/><rect x="649" y="846" width="8.5" height="8.5" fill="#f3fdff"/><rect x="657" y="846" width="8.5" height="8.5" fill="#f8fdff"/><rect x="665" y="846" width="8.5" height="8.5" fill="#fefdff"/><rect x="673" y="846" width="8.5" height="8.5" fill="#fff9fb"/><rect x="681" y="846" width="8.5" height="8.5" fill="#fff4f5"/><rect x="689" y="846" width="8.5" height="8.5" fill="#ffeef0"/><rect x="697" y="846" width="8.5" height="8.5" fill="#ffe9eb"/><rect x="705" y="846" width="8.5" height="8.5" fill="#ffe4e6"/><rect x="713" y="846" width="8.5" height="8.5" fill="#ffdfe1"/><rect x="721" y="846" width="8.5" height="8.5" fill="#ffdadc"/><rect x="729" y="846" width="8.5" height="8.5" fill="#ffd6d7"/><rect x="737" y="846" width="8.5" height="8.5" fill="#ffd1d2"/><rect x="745" y="846" width="8.5" height="8.5" fill="#ffccce"/><rect x="753" y="846" width="8.5" height="8.5" fill="#ffc8c9"/><rect x="761" y="846" width="8.5" height="8.5" fill="#ffc3c5"/><rect x="769" y="846" width="8.5" height="8.5" fill="#ffbfc0"/><rect x="777" y="846" width="8.5" height="8.5" fill="#ffbabc"/><rect x="785" y="846" width="8.5" height="8.5" fill="#ffb6b8"/><rect x="793" y="846" width="8.5" height="8.5" fill="#ffb2b4"/><rect x="801" y="846" width="8.5" height="8.5" fill="#ffaeb0"/><rect x="809" y="846" width="8.5" height="8.5" fill="#ffaaac"/><rect x="529" y="854" width="8.5" height="8.5" fill="#9cf9ff"/><rect x="537" y="854" width="8.5" height="8.5" fill="#a2f9ff"/><rect x="545" y="854" width="8.5" height="8.5" fill="#a8f9ff"/><rect x="553" y="854" width="8.5" height="8.5" fill="#aef9ff"/><rect x="561" y="854" width="8.5" height="8.5" fill="#b4f9ff"/><rect x="569" y="854" width="8.5" height="8.5" fill="#baf8ff"/><rect x="577" y="854" width="8.5" height="8.5" fill="#bff8ff"/><rect x="585" y="854" width="8.5" height="8.5" fill="#c5f8ff"/><rect x="593" y="854" width="8.5" height="8.5" fill="#cbf8ff"/><rect x="601" y="854" width="8.5" height="8.5" fill="#d1f8ff"/><rect x="609" y="854" width="8.5" height="8.5" fill="#d6f8ff"/><rect x="617" y="854" width="8.5" height="8.5" fill="#dcf8ff"/><rect x="625" y="854" width="8.5" height="8.5" fill="#e2f8ff"/><rect x="633" y="854" width="8.5" height="8.5" fill="#e7f8ff"/><rect x="641" y="854" width="8.5" height="8.5" fill="#edf8ff"/><rect x="649" y="854" width="8.5" height="8.5" fill="#f2f8ff"/><rect x="657" y="854" width="8.5" height="8.5" fill="#f8f8ff"/><rect x="665" y="854" width="8.5" height="8.5" fill="#fdf8ff"/><rect x="673" y="854" width="8.5" height="8.5" fill="#fff4fb"/><rect x="681" y="854" width="8.5" height="8.5" fill="#ffeff6"/><rect x="689" y="854" width="8.5" height="8.5" fill="#ffeaf1"/><rect x="697" y="854" width="8.5" height="8.5" fill="#ffe4eb"/><rect x="705" y="854" width="8.5" height="8.5" fill="#ffdfe6"/><rect x="713" y="854" width="8.5" height="8.5" fill="#ffdae1"/><rect x="721" y="854" width="8.5" height="8.5" fill="#ffd6dd"/><rect x="729" y="854" width="8.5" height="8.5" fill="#ffd1d8"/><rect x="737" y="854" width="8.5" height="8.5" fill="#ffccd3"/><rect x="745" y="854" width="8.5" height="8.5" fill="#ffc8ce"/><rect x="753" y="854" width="8.5" height="8.5" fill="#ffc3ca"/><rect x="761" y="854" width="8.5" height="8.5" fill="#ffbfc6"/><rect x="769" y="854" width="8.5" height="8.5" fill="#ffbac1"/><rect x="777" y="854" width="8.5" height="8.5" fill="#ffb6bd"/><rect x="785" y="854" width="8.5" height="8.5" fill="#ffb2b9"/><rect x="793" y="854" width="8.5" height="8.5" fill="#ffaeb5"/><rect x="801" y="854" width="8.5" height="8.5" fill="#ffaab0"/><rect x="809" y="854" width="8.5" height="8.5" fill="#ffa6ac"/><rect x="529" y="862" width="8.5" height="8.5" fill="#9cf4ff"/><rect x="537" y="862" width="8.5" height="8.5" fill="#a2f4ff"/><rect x="545" y="862" width="8.5" height="8.5" fill="#a8f4ff"/><rect x="553" y="862" width="8.5" height="8.5" fill="#aef3ff"/><rect x="561" y="862" width="8.5" height="8.5" fill="#b4f3ff"/><rect x="569" y="862" width="8.5" height="8.5" fill="#baf3ff"/><rect x="577" y="862" width="8.5" height="8.5" fill="#c0f3ff"/><rect x="585" y="862" width="8.5" height="8.5" fill="#c5f3ff"/><rect x="593" y="862" width="8.5" height="8.5" fill="#cbf3ff"/><rect x="601" y="862" width="8.5" height="8.5" fill="#d1f3ff"/><rect x="609" y="862" width="8.5" height="8.5" fill="#d6f3ff"/><rect x="617" y="862" width="8.5" height="8.5" fill="#dcf3ff"/><rect x="625" y="862" width="8.5" height="8.5" fill="#e1f3ff"/><rect x="633" y="862" width="8.5" height="8.5" fill="#e7f3ff"/><rect x="641" y="862" width="8.5" height="8.5" fill="#edf3ff"/><rect x="649" y="862" width="8.5" height="8.5" fill="#f2f3ff"/><rect x="657" y="862" width="8.5" height="8.5" fill="#f8f3ff"/><rect x="665" y="862" width="8.5" height="8.5" fill="#fdf3ff"/><rect x="673" y="862" width="8.5" height="8.5" fill="#ffeffc"/><rect x="681" y="862" width="8.5" height="8.5" fill="#ffeaf6"/><rect x="689" y="862" width="8.5" height="8.5" fill="#ffe5f1"/><rect x="697" y="862" width="8.5" height="8.5" fill="#ffe0ec"/><rect x="705" y="862" width="8.5" height="8.5" fill="#ffdbe7"/><rect x="713" y="862" width="8.5" height="8.5" fill="#ffd6e2"/><rect x="721" y="862" width="8.5" height="8.5" fill="#ffd1dd"/><rect x="729" y="862" width="8.5" height="8.5" fill="#ffccd8"/><rect x="737" y="862" width="8.5" height="8.5" fill="#ffc8d4"/><rect x="745" y="862" width="8.5" height="8.5" fill="#ffc3cf"/><rect x="753" y="862" width="8.5" height="8.5" fill="#ffbfcb"/><rect x="761" y="862" width="8.5" height="8.5" fill="#ffbac6"/><rect x="769" y="862" width="8.5" height="8.5" fill="#ffb6c2"/><rect x="777" y="862" width="8.5" height="8.5" fill="#ffb2be"/><rect x="785" y="862" width="8.5" height="8.5" fill="#ffadb9"/><rect x="793" y="862" width="8.5" height="8.5" fill="#ffa9b5"/><rect x="801" y="862" width="8.5" height="8.5" fill="#ffa5b1"/><rect x="809" y="862" width="8.5" height="8.5" fill="#ffa1ad"/><rect x="529" y="870" width="8.5" height="8.5" fill="#9defff"/><rect x="537" y="870" width="8.5" height="8.5" fill="#a3efff"/><rect x="545" y="870" width="8.5" height="8.5" fill="#a9eeff"/><rect x="553" y="870" width="8.5" height="8.5" fill="#aeeeff"/><rect x="561" y="870" width="8.5" height="8.5" fill="#b4eeff"/><rect x="569" y="870" width="8.5" height="8.5" fill="#baeeff"/><rect x="577" y="870" width="8.5" height="8.5" fill="#c0eeff"/><rect x="585" y="870" width="8.5" height="8.5" fill="#c5eeff"/><rect x="593" y="870" width="8.5" height="8.5" fill="#cbeeff"/><rect x="601" y="870" width="8.5" height="8.5" fill="#d1eeff"/><rect x="609" y="870" width="8.5" height="8.5" fill="#d6eeff"/><rect x="617" y="870" width="8.5" height="8.5" fill="#dceeff"/><rect x="625" y="870" width="8.5" height="8.5" fill="#e1eeff"/><rect x="633" y="870" width="8.5" height="8.5" fill="#e7eeff"/><rect x="641" y="870" width="8.5" height="8.5" fill="#ecedff"/><rect x="649" y="870" width="8.5" height="8.5" fill="#f2edff"/><rect x="657" y="870" width="8.5" height="8.5" fill="#f7edff"/><rect x="665" y="870" width="8.5" height="8.5" fill="#fdedff"/><rect x="673" y="870" width="8.5" height="8.5" fill="#ffeafc"/><rect x="681" y="870" width="8.5" height="8.5" fill="#ffe5f7"/><rect x="689" y="870" width="8.5" height="8.5" fill="#ffe0f1"/><rect x="697" y="870" width="8.5" height="8.5" fill="#ffdbec"/><rect x="705" y="870" width="8.5" height="8.5" fill="#ffd6e7"/><rect x="713" y="870" width="8.5" height="8.5" fill="#ffd1e3"/><rect x="721" y="870" width="8.5" height="8.5" fill="#ffccde"/><rect x="729" y="870" width="8.5" height="8.5" fill="#ffc8d9"/><rect x="737" y="870" width="8.5" height="8.5" fill="#ffc3d4"/><rect x="745" y="870" width="8.5" height="8.5" fill="#ffbed0"/><rect x="753" y="870" width="8.5" height="8.5" fill="#ffbacb"/><rect x="761" y="870" width="8.5" height="8.5" fill="#ffb6c7"/><rect x="769" y="870" width="8.5" height="8.5" fill="#ffb1c3"/><rect x="777" y="870" width="8.5" height="8.5" fill="#ffadbe"/><rect x="785" y="870" width="8.5" height="8.5" fill="#ffa9ba"/><rect x="793" y="870" width="8.5" height="8.5" fill="#ffa5b6"/><rect x="801" y="870" width="8.5" height="8.5" fill="#ffa1b2"/><rect x="809" y="870" width="8.5" height="8.5" fill="#ff9dae"/><rect x="529" y="878" width="8.5" height="8.5" fill="#9deaff"/><rect x="537" y="878" width="8.5" height="8.5" fill="#a3eaff"/><rect x="545" y="878" width="8.5" height="8.5" fill="#a9e9ff"/><rect x="553" y="878" width="8.5" height="8.5" fill="#afe9ff"/><rect x="561" y="878" width="8.5" height="8.5" fill="#b4e9ff"/><rect x="569" y="878" width="8.5" height="8.5" fill="#bae9ff"/><rect x="577" y="878" width="8.5" height="8.5" fill="#c0e9ff"/><rect x="585" y="878" width="8.5" height="8.5" fill="#c5e9ff"/><rect x="593" y="878" width="8.5" height="8.5" fill="#cbe9ff"/><rect x="601" y="878" width="8.5" height="8.5" fill="#d1e9ff"/><rect x="609" y="878" width="8.5" height="8.5" fill="#d6e9ff"/><rect x="617" y="878" width="8.5" height="8.5" fill="#dce8ff"/><rect x="625" y="878" width="8.5" height="8.5" fill="#e1e8ff"/><rect x="633" y="878" width="8.5" height="8.5" fill="#e7e8ff"/><rect x="641" y="878" width="8.5" height="8.5" fill="#ece8ff"/><rect x="649" y="878" width="8.5" height="8.5" fill="#f2e8ff"/><rect x="657" y="878" width="8.5" height="8.5" fill="#f7e8ff"/><rect x="665" y="878" width="8.5" height="8.5" fill="#fce8ff"/><rect x="673" y="878" width="8.5" height="8.5" fill="#ffe5fc"/><rect x="681" y="878" width="8.5" height="8.5" fill="#ffe0f7"/><rect x="689" y="878" width="8.5" height="8.5" fill="#ffdbf2"/><rect x="697" y="878" width="8.5" height="8.5" fill="#ffd6ed"/><rect x="705" y="878" width="8.5" height="8.5" fill="#ffd1e8"/><rect x="713" y="878" width="8.5" height="8.5" fill="#ffcce3"/><rect x="721" y="878" width="8.5" height="8.5" fill="#ffc8de"/><rect x="729" y="878" width="8.5" height="8.5" fill="#ffc3da"/><rect x="737" y="878" width="8.5" height="8.5" fill="#ffbed5"/><rect x="745" y="878" width="8.5" height="8.5" fill="#ffbad0"/><rect x="753" y="878" width="8.5" height="8.5" fill="#ffb6cc"/><rect x="761" y="878" width="8.5" height="8.5" fill="#ffb1c8"/><rect x="769" y="878" width="8.5" height="8.5" fill="#ffadc3"/><rect x="777" y="878" width="8.5" height="8.5" fill="#ffa9bf"/><rect x="785" y="878" width="8.5" height="8.5" fill="#ffa5bb"/><rect x="793" y="878" width="8.5" height="8.5" fill="#ffa1b7"/><rect x="801" y="878" width="8.5" height="8.5" fill="#ff9db3"/><rect x="809" y="878" width="8.5" height="8.5" fill="#ff99af"/><rect x="529" y="886" width="8.5" height="8.5" fill="#9ee5ff"/><rect x="537" y="886" width="8.5" height="8.5" fill="#a3e5ff"/><rect x="545" y="886" width="8.5" height="8.5" fill="#a9e4ff"/><rect x="553" y="886" width="8.5" height="8.5" fill="#afe4ff"/><rect x="561" y="886" width="8.5" height="8.5" fill="#b5e4ff"/><rect x="569" y="886" width="8.5" height="8.5" fill="#bae4ff"/><rect x="577" y="886" width="8.5" height="8.5" fill="#c0e4ff"/><rect x="585" y="886" width="8.5" height="8.5" fill="#c6e4ff"/><rect x="593" y="886" width="8.5" height="8.5" fill="#cbe4ff"/><rect x="601" y="886" width="8.5" height="8.5" fill="#d1e4ff"/><rect x="609" y="886" width="8.5" height="8.5" fill="#d6e3ff"/><rect x="617" y="886" width="8.5" height="8.5" fill="#dce3ff"/><rect x="625" y="886" width="8.5" height="8.5" fill="#e1e3ff"/><rect x="633" y="886" width="8.5" height="8.5" fill="#e6e3ff"/><rect x="641" y="886" width="8.5" height="8.5" fill="#ece3ff"/><rect x="649" y="886" width="8.5" height="8.5" fill="#f1e3ff"/><rect x="657" y="886" width="8.5" height="8.5" fill="#f7e3ff"/><rect x="665" y="886" width="8.5" height="8.5" fill="#fce2ff"/><rect x="673" y="886" width="8.5" height="8.5" fill="#ffe0fd"/><rect x="681" y="886" width="8.5" height="8.5" fill="#ffdbf8"/><rect x="689" y="886" width="8.5" height="8.5" fill="#ffd6f2"/><rect x="697" y="886" width="8.5" height="8.5" fill="#ffd1ed"/><rect x="705" y="886" width="8.5" height="8.5" fill="#ffcce8"/><rect x="713" y="886" width="8.5" height="8.5" fill="#ffc7e4"/><rect x="721" y="886" width="8.5" height="8.5" fill="#ffc3df"/><rect x="729" y="886" width="8.5" height="8.5" fill="#ffbeda"/><rect x="737" y="886" width="8.5" height="8.5" fill="#ffbad6"/><rect x="745" y="886" width="8.5" height="8.5" fill="#ffb5d1"/><rect x="753" y="886" width="8.5" height="8.5" fill="#ffb1cd"/><rect x="761" y="886" width="8.5" height="8.5" fill="#ffadc8"/><rect x="769" y="886" width="8.5" height="8.5" fill="#ffa9c4"/><rect x="777" y="886" width="8.5" height="8.5" fill="#ffa4c0"/><rect x="785" y="886" width="8.5" height="8.5" fill="#ffa0bc"/><rect x="793" y="886" width="8.5" height="8.5" fill="#ff9cb8"/><rect x="801" y="886" width="8.5" height="8.5" fill="#ff98b4"/><rect x="809" y="886" width="8.5" height="8.5" fill="#ff94b0"/><rect x="529" y="894" width="8.5" height="8.5" fill="#9ee0ff"/><rect x="537" y="894" width="8.5" height="8.5" fill="#a4e0ff"/><rect x="545" y="894" width="8.5" height="8.5" fill="#aadfff"/><rect x="553" y="894" width="8.5" height="8.5" fill="#afdfff"/><rect x="561" y="894" width="8.5" height="8.5" fill="#b5dfff"/><rect x="569" y="894" width="8.5" height="8.5" fill="#badfff"/><rect x="577" y="894" width="8.5" height="8.5" fill="#c0dfff"/><rect x="585" y="894" width="8.5" height="8.5" fill="#c6dfff"/><rect x="593" y="894" width="8.5" height="8.5" fill="#cbdeff"/><rect x="601" y="894" width="8.5" height="8.5" fill="#d1deff"/><rect x="609" y="894" width="8.5" height="8.5" fill="#d6deff"/><rect x="617" y="894" width="8.5" height="8.5" fill="#dbdeff"/><rect x="625" y="894" width="8.5" height="8.5" fill="#e1deff"/><rect x="633" y="894" width="8.5" height="8.5" fill="#e6deff"/><rect x="641" y="894" width="8.5" height="8.5" fill="#ecdeff"/><rect x="649" y="894" width="8.5" height="8.5" fill="#f1ddff"/><rect x="657" y="894" width="8.5" height="8.5" fill="#f6ddff"/><rect x="665" y="894" width="8.5" height="8.5" fill="#fcddff"/><rect x="673" y="894" width="8.5" height="8.5" fill="#ffdbfd"/><rect x="681" y="894" width="8.5" height="8.5" fill="#ffd6f8"/><rect x="689" y="894" width="8.5" height="8.5" fill="#ffd1f3"/><rect x="697" y="894" width="8.5" height="8.5" fill="#ffccee"/><rect x="705" y="894" width="8.5" height="8.5" fill="#ffc7e9"/><rect x="713" y="894" width="8.5" height="8.5" fill="#ffc3e4"/><rect x="721" y="894" width="8.5" height="8.5" fill="#ffbedf"/><rect x="729" y="894" width="8.5" height="8.5" fill="#ffbadb"/><rect x="737" y="894" width="8.5" height="8.5" fill="#ffb5d6"/><rect x="745" y="894" width="8.5" height="8.5" fill="#ffb1d2"/><rect x="753" y="894" width="8.5" height="8.5" fill="#ffaccd"/><rect x="761" y="894" width="8.5" height="8.5" fill="#ffa8c9"/><rect x="769" y="894" width="8.5" height="8.5" fill="#ffa4c5"/><rect x="777" y="894" width="8.5" height="8.5" fill="#ffa0c1"/><rect x="785" y="894" width="8.5" height="8.5" fill="#ff9cbd"/><rect x="793" y="894" width="8.5" height="8.5" fill="#ff98b8"/><rect x="801" y="894" width="8.5" height="8.5" fill="#ff94b5"/><rect x="809" y="894" width="8.5" height="8.5" fill="#ff90b1"/><rect x="529" y="902" width="8.5" height="8.5" fill="#9edbff"/><rect x="537" y="902" width="8.5" height="8.5" fill="#a4dbff"/><rect x="545" y="902" width="8.5" height="8.5" fill="#aadaff"/><rect x="553" y="902" width="8.5" height="8.5" fill="#afdaff"/><rect x="561" y="902" width="8.5" height="8.5" fill="#b5daff"/><rect x="569" y="902" width="8.5" height="8.5" fill="#bbdaff"/><rect x="577" y="902" width="8.5" height="8.5" fill="#c0daff"/><rect x="585" y="902" width="8.5" height="8.5" fill="#c6daff"/><rect x="593" y="902" width="8.5" height="8.5" fill="#cbd9ff"/><rect x="601" y="902" width="8.5" height="8.5" fill="#d1d9ff"/><rect x="609" y="902" width="8.5" height="8.5" fill="#d6d9ff"/><rect x="617" y="902" width="8.5" height="8.5" fill="#dbd9ff"/><rect x="625" y="902" width="8.5" height="8.5" fill="#e1d9ff"/><rect x="633" y="902" width="8.5" height="8.5" fill="#e6d8ff"/><rect x="641" y="902" width="8.5" height="8.5" fill="#ebd8ff"/><rect x="649" y="902" width="8.5" height="8.5" fill="#f1d8ff"/><rect x="657" y="902" width="8.5" height="8.5" fill="#f6d8ff"/><rect x="665" y="902" width="8.5" height="8.5" fill="#fbd8ff"/><rect x="673" y="902" width="8.5" height="8.5" fill="#ffd6fe"/><rect x="681" y="902" width="8.5" height="8.5" fill="#ffd1f8"/><rect x="689" y="902" width="8.5" height="8.5" fill="#ffccf3"/><rect x="697" y="902" width="8.5" height="8.5" fill="#ffc7ee"/><rect x="705" y="902" width="8.5" height="8.5" fill="#ffc3e9"/><rect x="713" y="902" width="8.5" height="8.5" fill="#ffbee5"/><rect x="721" y="902" width="8.5" height="8.5" fill="#ffb9e0"/><rect x="729" y="902" width="8.5" height="8.5" fill="#ffb5db"/><rect x="737" y="902" width="8.5" height="8.5" fill="#ffb1d7"/><rect x="745" y="902" width="8.5" height="8.5" fill="#ffacd2"/><rect x="753" y="902" width="8.5" height="8.5" fill="#ffa8ce"/><rect x="761" y="902" width="8.5" height="8.5" fill="#ffa4ca"/><rect x="769" y="902" width="8.5" height="8.5" fill="#ffa0c6"/><rect x="777" y="902" width="8.5" height="8.5" fill="#ff9cc1"/><rect x="785" y="902" width="8.5" height="8.5" fill="#ff98bd"/><rect x="793" y="902" width="8.5" height="8.5" fill="#ff94b9"/><rect x="801" y="902" width="8.5" height="8.5" fill="#ff90b5"/><rect x="809" y="902" width="8.5" height="8.5" fill="#ff8cb1"/><rect x="529" y="910" width="8.5" height="8.5" fill="#9fd6ff"/><rect x="537" y="910" width="8.5" height="8.5" fill="#a4d6ff"/><rect x="545" y="910" width="8.5" height="8.5" fill="#aad5ff"/><rect x="553" y="910" width="8.5" height="8.5" fill="#b0d5ff"/><rect x="561" y="910" width="8.5" height="8.5" fill="#b5d5ff"/><rect x="569" y="910" width="8.5" height="8.5" fill="#bbd5ff"/><rect x="577" y="910" width="8.5" height="8.5" fill="#c0d5ff"/><rect x="585" y="910" width="8.5" height="8.5" fill="#c6d4ff"/><rect x="593" y="910" width="8.5" height="8.5" fill="#cbd4ff"/><rect x="601" y="910" width="8.5" height="8.5" fill="#d1d4ff"/><rect x="609" y="910" width="8.5" height="8.5" fill="#d6d4ff"/><rect x="617" y="910" width="8.5" height="8.5" fill="#dbd4ff"/><rect x="625" y="910" width="8.5" height="8.5" fill="#e1d3ff"/><rect x="633" y="910" width="8.5" height="8.5" fill="#e6d3ff"/><rect x="641" y="910" width="8.5" height="8.5" fill="#ebd3ff"/><rect x="649" y="910" width="8.5" height="8.5" fill="#f0d3ff"/><rect x="657" y="910" width="8.5" height="8.5" fill="#f6d3ff"/><rect x="665" y="910" width="8.5" height="8.5" fill="#fbd2ff"/><rect x="673" y="910" width="8.5" height="8.5" fill="#ffd1fe"/><rect x="681" y="910" width="8.5" height="8.5" fill="#ffccf9"/><rect x="689" y="910" width="8.5" height="8.5" fill="#ffc7f4"/><rect x="697" y="910" width="8.5" height="8.5" fill="#ffc3ef"/><rect x="705" y="910" width="8.5" height="8.5" fill="#ffbeea"/><rect x="713" y="910" width="8.5" height="8.5" fill="#ffb9e5"/><rect x="721" y="910" width="8.5" height="8.5" fill="#ffb5e1"/><rect x="729" y="910" width="8.5" height="8.5" fill="#ffb0dc"/><rect x="737" y="910" width="8.5" height="8.5" fill="#ffacd7"/><rect x="745" y="910" width="8.5" height="8.5" fill="#ffa8d3"/><rect x="753" y="910" width="8.5" height="8.5" fill="#ffa3cf"/><rect x="761" y="910" width="8.5" height="8.5" fill="#ff9fca"/><rect x="769" y="910" width="8.5" height="8.5" fill="#ff9bc6"/><rect x="777" y="910" width="8.5" height="8.5" fill="#ff97c2"/><rect x="785" y="910" width="8.5" height="8.5" fill="#ff93be"/><rect x="793" y="910" width="8.5" height="8.5" fill="#ff8fba"/><rect x="801" y="910" width="8.5" height="8.5" fill="#ff8bb6"/><rect x="809" y="910" width="8.5" height="8.5" fill="#ff88b2"/><rect x="529" y="918" width="8.5" height="8.5" fill="#9fd1ff"/><rect x="537" y="918" width="8.5" height="8.5" fill="#a5d1ff"/><rect x="545" y="918" width="8.5" height="8.5" fill="#aad0ff"/><rect x="553" y="918" width="8.5" height="8.5" fill="#b0d0ff"/><rect x="561" y="918" width="8.5" height="8.5" fill="#b5d0ff"/><rect x="569" y="918" width="8.5" height="8.5" fill="#bbd0ff"/><rect x="577" y="918" width="8.5" height="8.5" fill="#c0d0ff"/><rect x="585" y="918" width="8.5" height="8.5" fill="#c6cfff"/><rect x="593" y="918" width="8.5" height="8.5" fill="#cbcfff"/><rect x="601" y="918" width="8.5" height="8.5" fill="#d1cfff"/><rect x="609" y="918" width="8.5" height="8.5" fill="#d6cfff"/><rect x="617" y="918" width="8.5" height="8.5" fill="#dbcfff"/><rect x="625" y="918" width="8.5" height="8.5" fill="#e0ceff"/><rect x="633" y="918" width="8.5" height="8.5" fill="#e6ceff"/><rect x="641" y="918" width="8.5" height="8.5" fill="#ebceff"/><rect x="649" y="918" width="8.5" height="8.5" fill="#f0ceff"/><rect x="657" y="918" width="8.5" height="8.5" fill="#f5cdff"/><rect x="665" y="918" width="8.5" height="8.5" fill="#fbcdff"/><rect x="673" y="918" width="8.5" height="8.5" fill="#ffccfe"/><rect x="681" y="918" width="8.5" height="8.5" fill="#ffc7f9"/><rect x="689" y="918" width="8.5" height="8.5" fill="#ffc3f4"/><rect x="697" y="918" width="8.5" height="8.5" fill="#ffbeef"/><rect x="705" y="918" width="8.5" height="8.5" fill="#ffb9ea"/><rect x="713" y="918" width="8.5" height="8.5" fill="#ffb5e6"/><rect x="721" y="918" width="8.5" height="8.5" fill="#ffb0e1"/><rect x="729" y="918" width="8.5" height="8.5" fill="#ffacdd"/><rect x="737" y="918" width="8.5" height="8.5" fill="#ffa7d8"/><rect x="745" y="918" width="8.5" height="8.5" fill="#ffa3d4"/><rect x="753" y="918" width="8.5" height="8.5" fill="#ff9fcf"/><rect x="761" y="918" width="8.5" height="8.5" fill="#ff9bcb"/><rect x="769" y="918" width="8.5" height="8.5" fill="#ff97c7"/><rect x="777" y="918" width="8.5" height="8.5" fill="#ff93c3"/><rect x="785" y="918" width="8.5" height="8.5" fill="#ff8fbf"/><rect x="793" y="918" width="8.5" height="8.5" fill="#ff8bbb"/><rect x="801" y="918" width="8.5" height="8.5" fill="#ff87b7"/><rect x="809" y="918" width="8.5" height="8.5" fill="#ff83b3"/><rect x="529" y="926" width="8.5" height="8.5" fill="#a0ccff"/><rect x="537" y="926" width="8.5" height="8.5" fill="#a5ccff"/><rect x="545" y="926" width="8.5" height="8.5" fill="#abccff"/><rect x="553" y="926" width="8.5" height="8.5" fill="#b0cbff"/><rect x="561" y="926" width="8.5" height="8.5" fill="#b6cbff"/><rect x="569" y="926" width="8.5" height="8.5" fill="#bbcbff"/><rect x="577" y="926" width="8.5" height="8.5" fill="#c1cbff"/><rect x="585" y="926" width="8.5" height="8.5" fill="#c6caff"/><rect x="593" y="926" width="8.5" height="8.5" fill="#cbcaff"/><rect x="601" y="926" width="8.5" height="8.5" fill="#d1caff"/><rect x="609" y="926" width="8.5" height="8.5" fill="#d6caff"/><rect x="617" y="926" width="8.5" height="8.5" fill="#dbc9ff"/><rect x="625" y="926" width="8.5" height="8.5" fill="#e0c9ff"/><rect x="633" y="926" width="8.5" height="8.5" fill="#e6c9ff"/><rect x="641" y="926" width="8.5" height="8.5" fill="#ebc9ff"/><rect x="649" y="926" width="8.5" height="8.5" fill="#f0c8ff"/><rect x="657" y="926" width="8.5" height="8.5" fill="#f5c8ff"/><rect x="665" y="926" width="8.5" height="8.5" fill="#fac8ff"/><rect x="673" y="926" width="8.5" height="8.5" fill="#ffc7ff"/><rect x="681" y="926" width="8.5" height="8.5" fill="#ffc2fa"/><rect x="689" y="926" width="8.5" height="8.5" fill="#ffbef5"/><rect x="697" y="926" width="8.5" height="8.5" fill="#ffb9f0"/><rect x="705" y="926" width="8.5" height="8.5" fill="#ffb4eb"/><rect x="713" y="926" width="8.5" height="8.5" fill="#ffb0e6"/><rect x="721" y="926" width="8.5" height="8.5" fill="#ffabe2"/><rect x="729" y="926" width="8.5" height="8.5" fill="#ffa7dd"/><rect x="737" y="926" width="8.5" height="8.5" fill="#ffa3d9"/><rect x="745" y="926" width="8.5" height="8.5" fill="#ff9ed4"/><rect x="753" y="926" width="8.5" height="8.5" fill="#ff9ad0"/><rect x="761" y="926" width="8.5" height="8.5" fill="#ff96cc"/><rect x="769" y="926" width="8.5" height="8.5" fill="#ff92c8"/><rect x="777" y="926" width="8.5" height="8.5" fill="#ff8ec4"/><rect x="785" y="926" width="8.5" height="8.5" fill="#ff8abf"/><rect x="793" y="926" width="8.5" height="8.5" fill="#ff86bc"/><rect x="801" y="926" width="8.5" height="8.5" fill="#ff83b8"/><rect x="809" y="926" width="8.5" height="8.5" fill="#ff7fb4"/><rect x="529" y="934" width="8.5" height="8.5" fill="#a0c7ff"/><rect x="537" y="934" width="8.5" height="8.5" fill="#a5c7ff"/><rect x="545" y="934" width="8.5" height="8.5" fill="#abc7ff"/><rect x="553" y="934" width="8.5" height="8.5" fill="#b0c6ff"/><rect x="561" y="934" width="8.5" height="8.5" fill="#b6c6ff"/><rect x="569" y="934" width="8.5" height="8.5" fill="#bbc6ff"/><rect x="577" y="934" width="8.5" height="8.5" fill="#c1c6ff"/><rect x="585" y="934" width="8.5" height="8.5" fill="#c6c5ff"/><rect x="593" y="934" width="8.5" height="8.5" fill="#cbc5ff"/><rect x="601" y="934" width="8.5" height="8.5" fill="#d1c5ff"/><rect x="609" y="934" width="8.5" height="8.5" fill="#d6c5ff"/><rect x="617" y="934" width="8.5" height="8.5" fill="#dbc4ff"/><rect x="625" y="934" width="8.5" height="8.5" fill="#e0c4ff"/><rect x="633" y="934" width="8.5" height="8.5" fill="#e5c4ff"/><rect x="641" y="934" width="8.5" height="8.5" fill="#ebc3ff"/><rect x="649" y="934" width="8.5" height="8.5" fill="#f0c3ff"/><rect x="657" y="934" width="8.5" height="8.5" fill="#f5c3ff"/><rect x="665" y="934" width="8.5" height="8.5" fill="#fac3ff"/><rect x="673" y="934" width="8.5" height="8.5" fill="#ffc2ff"/><rect x="681" y="934" width="8.5" height="8.5" fill="#ffbefa"/><rect x="689" y="934" width="8.5" height="8.5" fill="#ffb9f5"/><rect x="697" y="934" width="8.5" height="8.5" fill="#ffb4f0"/><rect x="705" y="934" width="8.5" height="8.5" fill="#ffb0eb"/><rect x="713" y="934" width="8.5" height="8.5" fill="#ffabe7"/><rect x="721" y="934" width="8.5" height="8.5" fill="#ffa7e2"/><rect x="729" y="934" width="8.5" height="8.5" fill="#ffa2de"/><rect x="737" y="934" width="8.5" height="8.5" fill="#ff9ed9"/><rect x="745" y="934" width="8.5" height="8.5" fill="#ff9ad5"/><rect x="753" y="934" width="8.5" height="8.5" fill="#ff96d1"/><rect x="761" y="934" width="8.5" height="8.5" fill="#ff92cc"/><rect x="769" y="934" width="8.5" height="8.5" fill="#ff8ec8"/><rect x="777" y="934" width="8.5" height="8.5" fill="#ff8ac4"/><rect x="785" y="934" width="8.5" height="8.5" fill="#ff86c0"/><rect x="793" y="934" width="8.5" height="8.5" fill="#ff82bc"/><rect x="801" y="934" width="8.5" height="8.5" fill="#ff7eb8"/><rect x="809" y="934" width="8.5" height="8.5" fill="#ff7bb5"/></g></g>
<rect x="536.6" y="758.4" width="267.6" height="175.9" fill="none" stroke="#8c8c8c" stroke-width="1.6"/>
<path d="M570.4 934.6 Q680 855 804.2 786" fill="none" stroke="#fff" stroke-opacity="0.8" stroke-width="4.6" clip-path="url(#cclip)"/>
<path d="M570.4 934.6 Q680 855 804.2 786" fill="none" stroke="#000" stroke-width="2.8" clip-path="url(#cclip)"/>
<rect x="662.4" y="837.3" width="15.3" height="15.5" fill="#fff" stroke="#fff" stroke-width="4"/>
<rect x="663.2" y="838.1" width="13.7" height="13.9" fill="#fff" stroke="#000" stroke-width="1.7"/>
<circle cx="707.2" cy="828.2" r="5" fill="none" stroke="#fff" stroke-width="2.4"/>
<circle cx="706" cy="829.4" r="5" fill="none" stroke="#fff" stroke-width="2.4"/>
<circle cx="703" cy="830.9" r="5" fill="none" stroke="#fff" stroke-width="2.4"/>
<circle cx="698.1" cy="829.7" r="5" fill="none" stroke="#fff" stroke-width="2.4"/>
<circle cx="692.8" cy="829.4" r="5" fill="none" stroke="#fff" stroke-width="2.4"/>
<circle cx="690.2" cy="830.1" r="5" fill="none" stroke="#fff" stroke-width="2.4"/>
<circle cx="687.5" cy="830.9" r="5" fill="none" stroke="#fff" stroke-width="2.4"/>
<circle cx="684.3" cy="832.6" r="5" fill="none" stroke="#fff" stroke-width="2.4"/>
<circle cx="707.2" cy="828.2" r="4.6" fill="#555" stroke="#000" stroke-width="1"/>
<circle cx="706" cy="829.4" r="4.6" fill="#666" stroke="#000" stroke-width="1"/>
<circle cx="703" cy="830.9" r="4.6" fill="#888" stroke="#000" stroke-width="1"/>
<circle cx="698.1" cy="829.7" r="4.6" fill="#aaa" stroke="#000" stroke-width="1"/>
<circle cx="692.8" cy="829.4" r="4.6" fill="#bbb" stroke="#000" stroke-width="1"/>
<circle cx="690.2" cy="830.1" r="4.6" fill="#ddd" stroke="#000" stroke-width="1"/>
<circle cx="687.5" cy="830.9" r="4.6" fill="#eee" stroke="#000" stroke-width="1"/>
<circle cx="684.3" cy="832.6" r="4.6" fill="#fff" stroke="#000" stroke-width="1"/>
<line x1="530.4" y1="809.2" x2="536.6" y2="809.2" stroke="#d0d0d0" stroke-width="1.2" />
<text x="529.9" y="814.4" font-size="15.0" fill="#dcdcdc" text-anchor="end" textLength="29.7" lengthAdjust="spacingAndGlyphs" >0.34</text>
<line x1="530.4" y1="880.0" x2="536.6" y2="880.0" stroke="#d0d0d0" stroke-width="1.2" />
<text x="529.9" y="885.2" font-size="15.0" fill="#dcdcdc" text-anchor="end" textLength="29.7" lengthAdjust="spacingAndGlyphs" >0.32</text>
<line x1="548.7" y1="934.3" x2="548.7" y2="940.4" stroke="#d0d0d0" stroke-width="1.4" />
<text x="548.7" y="957.2" font-size="15.0" fill="#dcdcdc" text-anchor="middle" textLength="29.7" lengthAdjust="spacingAndGlyphs" >0.29</text>
<line x1="602.2" y1="934.3" x2="602.2" y2="940.4" stroke="#d0d0d0" stroke-width="1.4" />
<text x="602.2" y="957.2" font-size="15.0" fill="#dcdcdc" text-anchor="middle" textLength="21.3" lengthAdjust="spacingAndGlyphs" >0.3</text>
<line x1="655.7" y1="934.3" x2="655.7" y2="940.4" stroke="#d0d0d0" stroke-width="1.4" />
<text x="655.7" y="957.2" font-size="15.0" fill="#dcdcdc" text-anchor="middle" textLength="29.7" lengthAdjust="spacingAndGlyphs" >0.31</text>
<line x1="709.1" y1="934.3" x2="709.1" y2="940.4" stroke="#d0d0d0" stroke-width="1.4" />
<text x="709.1" y="957.2" font-size="15.0" fill="#dcdcdc" text-anchor="middle" textLength="29.7" lengthAdjust="spacingAndGlyphs" >0.32</text>
<line x1="762.6" y1="934.3" x2="762.6" y2="940.4" stroke="#d0d0d0" stroke-width="1.4" />
<text x="762.6" y="957.2" font-size="15.0" fill="#dcdcdc" text-anchor="middle" textLength="29.7" lengthAdjust="spacingAndGlyphs" >0.33</text>
<rect x="815" y="728.2" width="1096.5" height="242.8" fill="none" stroke="#e8e8e8" stroke-width="1.2" stroke-dasharray="1.3 3"/>
<rect x="816.5" y="729.5" width="908.0" height="25.0" fill="url(#thead)" />
<rect x="816.5" y="729.5" width="10.0" height="25.0" fill="#000" />
<text x="941.0" y="746.7" font-size="13.3" fill="#f0f0f0" >0</text>
<text x="1019.3" y="746.7" font-size="13.3" fill="#f0f0f0" >10</text>
<text x="1090.2" y="746.7" font-size="13.3" fill="#f0f0f0" >20</text>
<text x="1161.1" y="746.7" font-size="13.3" fill="#f0f0f0" >30</text>
<text x="1232.3" y="746.7" font-size="13.3" fill="#f0f0f0" >40</text>
<text x="1302.7" y="746.7" font-size="13.3" fill="#f0f0f0" >50</text>
<text x="1373.6" y="746.7" font-size="13.3" fill="#f0f0f0" >60</text>
<text x="1444.3" y="746.7" font-size="13.3" fill="#f0f0f0" >70</text>
<text x="1515.4" y="746.7" font-size="13.3" fill="#f0f0f0" >80</text>
<text x="1586.4" y="746.7" font-size="13.3" fill="#f0f0f0" >90</text>
<text x="1657.1" y="746.7" font-size="13.3" fill="#f0f0f0" >100</text>
<rect x="826.5" y="754.5" width="898.0" height="24.6" fill="#3c3c3c" />
<rect x="816.5" y="754.5" width="10.0" height="24.6" fill="#222" />
<text x="830.7" y="773.1" font-size="16.5" fill="#f4f4f4" textLength="47.0" lengthAdjust="spacingAndGlyphs" >x: CIE31</text>
<text x="941.0" y="773.1" font-size="16.5" fill="#f4f4f4" textLength="39.9" lengthAdjust="spacingAndGlyphs" >0.1579</text>
<text x="1019.3" y="773.1" font-size="16.5" fill="#f4f4f4" textLength="39.9" lengthAdjust="spacingAndGlyphs" >0.3178</text>
<text x="1090.2" y="773.1" font-size="16.5" fill="#f4f4f4" textLength="39.9" lengthAdjust="spacingAndGlyphs" >0.3196</text>
<text x="1161.1" y="773.1" font-size="16.5" fill="#f4f4f4" textLength="39.9" lengthAdjust="spacingAndGlyphs" >0.3192</text>
<text x="1232.3" y="773.1" font-size="16.5" fill="#f4f4f4" textLength="39.9" lengthAdjust="spacingAndGlyphs" >0.3194</text>
<text x="1302.7" y="773.1" font-size="16.5" fill="#f4f4f4" textLength="39.9" lengthAdjust="spacingAndGlyphs" >0.3193</text>
<text x="1373.6" y="773.1" font-size="16.5" fill="#f4f4f4" textLength="39.9" lengthAdjust="spacingAndGlyphs" >0.3185</text>
<text x="1444.3" y="773.1" font-size="16.5" fill="#f4f4f4" textLength="39.9" lengthAdjust="spacingAndGlyphs" >0.3180</text>
<text x="1515.4" y="773.1" font-size="16.5" fill="#f4f4f4" textLength="39.9" lengthAdjust="spacingAndGlyphs" >0.3168</text>
<text x="1586.4" y="773.1" font-size="16.5" fill="#f4f4f4" textLength="39.9" lengthAdjust="spacingAndGlyphs" >0.3160</text>
<text x="1657.1" y="773.1" font-size="16.5" fill="#f4f4f4" textLength="39.9" lengthAdjust="spacingAndGlyphs" >0.3154</text>
<rect x="826.5" y="779.1" width="898.0" height="24.6" fill="#7c7c7c" />
<rect x="816.5" y="779.1" width="10.0" height="24.6" fill="#2a2a2a" />
<text x="830.7" y="797.8" font-size="16.5" fill="#e8e8e8" textLength="47.0" lengthAdjust="spacingAndGlyphs" >y: CIE31</text>
<text x="941.0" y="797.8" font-size="16.5" fill="#e8e8e8" textLength="39.9" lengthAdjust="spacingAndGlyphs" >0.4271</text>
<text x="1019.3" y="797.8" font-size="16.5" fill="#e8e8e8" textLength="39.9" lengthAdjust="spacingAndGlyphs" >0.3333</text>
<text x="1090.2" y="797.8" font-size="16.5" fill="#e8e8e8" textLength="39.9" lengthAdjust="spacingAndGlyphs" >0.3340</text>
<text x="1161.1" y="797.8" font-size="16.5" fill="#e8e8e8" textLength="39.9" lengthAdjust="spacingAndGlyphs" >0.3329</text>
<text x="1232.3" y="797.8" font-size="16.5" fill="#e8e8e8" textLength="39.9" lengthAdjust="spacingAndGlyphs" >0.3333</text>
<text x="1302.7" y="797.8" font-size="16.5" fill="#e8e8e8" textLength="39.9" lengthAdjust="spacingAndGlyphs" >0.3337</text>
<text x="1373.6" y="797.8" font-size="16.5" fill="#e8e8e8" textLength="39.9" lengthAdjust="spacingAndGlyphs" >0.3332</text>
<text x="1444.3" y="797.8" font-size="16.5" fill="#e8e8e8" textLength="39.9" lengthAdjust="spacingAndGlyphs" >0.3335</text>
<text x="1515.4" y="797.8" font-size="16.5" fill="#e8e8e8" textLength="39.9" lengthAdjust="spacingAndGlyphs" >0.3338</text>
<text x="1586.4" y="797.8" font-size="16.5" fill="#e8e8e8" textLength="39.9" lengthAdjust="spacingAndGlyphs" >0.3331</text>
<text x="1657.1" y="797.8" font-size="16.5" fill="#e8e8e8" textLength="39.9" lengthAdjust="spacingAndGlyphs" >0.3328</text>
<rect x="826.5" y="803.8" width="898.0" height="24.6" fill="#3c3c3c" />
<rect x="816.5" y="803.8" width="10.0" height="24.6" fill="#222" />
<text x="830.7" y="822.4" font-size="16.5" fill="#f4f4f4" textLength="8.0" lengthAdjust="spacingAndGlyphs" >Y</text>
<text x="941.0" y="822.4" font-size="16.5" fill="#f4f4f4" textLength="39.9" lengthAdjust="spacingAndGlyphs" >0.0142</text>
<text x="1019.3" y="822.4" font-size="16.5" fill="#f4f4f4" textLength="39.9" lengthAdjust="spacingAndGlyphs" >2.4678</text>
<text x="1090.2" y="822.4" font-size="16.5" fill="#f4f4f4" textLength="47.1" lengthAdjust="spacingAndGlyphs" >11.1172</text>
<rect x="1158.0" y="804.7" width="69.5" height="23.0" fill="#f2f2f2" />
<text x="1161.4" y="822.4" font-size="16.5" fill="#111" textLength="46.5" lengthAdjust="spacingAndGlyphs" >26.2827</text>
<text x="1232.3" y="822.4" font-size="16.5" fill="#f4f4f4" textLength="47.1" lengthAdjust="spacingAndGlyphs" >51.8643</text>
<text x="1302.7" y="822.4" font-size="16.5" fill="#f4f4f4" textLength="47.1" lengthAdjust="spacingAndGlyphs" >86.2027</text>
<text x="1373.6" y="822.4" font-size="16.5" fill="#f4f4f4" textLength="54.4" lengthAdjust="spacingAndGlyphs" >124.0200</text>
<text x="1444.3" y="822.4" font-size="16.5" fill="#f4f4f4" textLength="54.4" lengthAdjust="spacingAndGlyphs" >170.1960</text>
<text x="1515.4" y="822.4" font-size="16.5" fill="#f4f4f4" textLength="54.4" lengthAdjust="spacingAndGlyphs" >230.2535</text>
<text x="1586.4" y="822.4" font-size="16.5" fill="#f4f4f4" textLength="54.4" lengthAdjust="spacingAndGlyphs" >300.4115</text>
<text x="1657.1" y="822.4" font-size="16.5" fill="#f4f4f4" textLength="54.4" lengthAdjust="spacingAndGlyphs" >378.6101</text>
<rect x="826.5" y="828.5" width="898.0" height="24.6" fill="#7c7c7c" />
<rect x="816.5" y="828.5" width="10.0" height="24.6" fill="#2a2a2a" />
<text x="830.7" y="847.1" font-size="16.5" fill="#e8e8e8" textLength="49.7" lengthAdjust="spacingAndGlyphs" >Target Y</text>
<text x="941.0" y="847.1" font-size="16.5" fill="#e8e8e8" textLength="39.9" lengthAdjust="spacingAndGlyphs" >0.0142</text>
<text x="1019.3" y="847.1" font-size="16.5" fill="#e8e8e8" textLength="39.9" lengthAdjust="spacingAndGlyphs" >2.5073</text>
<text x="1090.2" y="847.1" font-size="16.5" fill="#e8e8e8" textLength="47.1" lengthAdjust="spacingAndGlyphs" >10.9902</text>
<text x="1161.1" y="847.1" font-size="16.5" fill="#e8e8e8" textLength="47.1" lengthAdjust="spacingAndGlyphs" >26.4126</text>
<text x="1232.3" y="847.1" font-size="16.5" fill="#e8e8e8" textLength="47.1" lengthAdjust="spacingAndGlyphs" >50.4464</text>
<text x="1302.7" y="847.1" font-size="16.5" fill="#e8e8e8" textLength="47.1" lengthAdjust="spacingAndGlyphs" >83.1235</text>
<text x="1373.6" y="847.1" font-size="16.5" fill="#e8e8e8" textLength="54.4" lengthAdjust="spacingAndGlyphs" >123.0719</text>
<text x="1444.3" y="847.1" font-size="16.5" fill="#e8e8e8" textLength="54.4" lengthAdjust="spacingAndGlyphs" >171.6910</text>
<text x="1515.4" y="847.1" font-size="16.5" fill="#e8e8e8" textLength="54.4" lengthAdjust="spacingAndGlyphs" >231.7397</text>
<text x="1586.4" y="847.1" font-size="16.5" fill="#e8e8e8" textLength="54.4" lengthAdjust="spacingAndGlyphs" >301.7235</text>
<text x="1657.1" y="847.1" font-size="16.5" fill="#e8e8e8" textLength="54.4" lengthAdjust="spacingAndGlyphs" >378.6101</text>
<rect x="826.5" y="853.1" width="898.0" height="24.6" fill="#3c3c3c" />
<rect x="816.5" y="853.1" width="10.0" height="24.6" fill="#222" />
<text x="830.7" y="871.7" font-size="16.5" fill="#f4f4f4" textLength="102.0" lengthAdjust="spacingAndGlyphs" >Gamma Log/Log</text>
<text x="941.0" y="871.7" font-size="16.5" fill="#f4f4f4" textLength="39.9" lengthAdjust="spacingAndGlyphs" >1.1061</text>
<text x="1019.3" y="871.7" font-size="16.5" fill="#f4f4f4" textLength="39.9" lengthAdjust="spacingAndGlyphs" >2.2045</text>
<text x="1090.2" y="871.7" font-size="16.5" fill="#f4f4f4" textLength="39.9" lengthAdjust="spacingAndGlyphs" >2.1921</text>
<text x="1161.1" y="871.7" font-size="16.5" fill="#f4f4f4" textLength="39.9" lengthAdjust="spacingAndGlyphs" >2.2037</text>
<text x="1232.3" y="871.7" font-size="16.5" fill="#f4f4f4" textLength="39.9" lengthAdjust="spacingAndGlyphs" >2.1695</text>
<text x="1302.7" y="871.7" font-size="16.5" fill="#f4f4f4" textLength="39.9" lengthAdjust="spacingAndGlyphs" >2.1470</text>
<text x="1373.6" y="871.7" font-size="16.5" fill="#f4f4f4" textLength="39.9" lengthAdjust="spacingAndGlyphs" >2.1848</text>
<text x="1444.3" y="871.7" font-size="16.5" fill="#f4f4f4" textLength="39.9" lengthAdjust="spacingAndGlyphs" >2.2242</text>
<text x="1515.4" y="871.7" font-size="16.5" fill="#f4f4f4" textLength="39.9" lengthAdjust="spacingAndGlyphs" >2.2287</text>
<text x="1586.4" y="871.7" font-size="16.5" fill="#f4f4f4" textLength="39.9" lengthAdjust="spacingAndGlyphs" >2.2421</text>
<text x="1657.1" y="871.7" font-size="16.5" fill="#f4f4f4" textLength="39.9" lengthAdjust="spacingAndGlyphs" >2.1999</text>
<rect x="826.5" y="877.8" width="898.0" height="24.6" fill="#7c7c7c" />
<rect x="816.5" y="877.8" width="10.0" height="24.6" fill="#2a2a2a" />
<text x="830.7" y="896.4" font-size="16.5" fill="#e8e8e8" textLength="24.0" lengthAdjust="spacingAndGlyphs" >CCT</text>
<text x="941.0" y="896.4" font-size="16.5" fill="#e8e8e8" textLength="68.8" lengthAdjust="spacingAndGlyphs" >12480.0000</text>
<text x="1019.3" y="896.4" font-size="16.5" fill="#e8e8e8" textLength="61.6" lengthAdjust="spacingAndGlyphs" >6208.0000</text>
<text x="1090.2" y="896.4" font-size="16.5" fill="#e8e8e8" textLength="61.6" lengthAdjust="spacingAndGlyphs" >6113.0000</text>
<text x="1161.1" y="896.4" font-size="16.5" fill="#e8e8e8" textLength="61.6" lengthAdjust="spacingAndGlyphs" >6136.0000</text>
<text x="1232.3" y="896.4" font-size="16.5" fill="#e8e8e8" textLength="61.6" lengthAdjust="spacingAndGlyphs" >6125.0000</text>
<text x="1302.7" y="896.4" font-size="16.5" fill="#e8e8e8" textLength="61.6" lengthAdjust="spacingAndGlyphs" >6128.0000</text>
<text x="1373.6" y="896.4" font-size="16.5" fill="#e8e8e8" textLength="61.6" lengthAdjust="spacingAndGlyphs" >6175.0000</text>
<text x="1444.3" y="896.4" font-size="16.5" fill="#e8e8e8" textLength="61.6" lengthAdjust="spacingAndGlyphs" >6199.0000</text>
<text x="1515.4" y="896.4" font-size="16.5" fill="#e8e8e8" textLength="61.6" lengthAdjust="spacingAndGlyphs" >6255.0000</text>
<text x="1586.4" y="896.4" font-size="16.5" fill="#e8e8e8" textLength="61.6" lengthAdjust="spacingAndGlyphs" >6304.0000</text>
<text x="1657.1" y="896.4" font-size="16.5" fill="#e8e8e8" textLength="61.6" lengthAdjust="spacingAndGlyphs" >6335.0000</text>
<rect x="826.5" y="902.4" width="898.0" height="24.6" fill="#3c3c3c" />
<rect x="816.5" y="902.4" width="10.0" height="24.6" fill="#222" />
<text x="830.7" y="921.0" font-size="16.5" fill="#f4f4f4" textLength="49.7" lengthAdjust="spacingAndGlyphs" >ΔE 2000</text>
<text x="941.0" y="921.0" font-size="16.5" fill="#f4f4f4" textLength="39.9" lengthAdjust="spacingAndGlyphs" >0.1340</text>
<text x="1019.3" y="921.0" font-size="16.5" fill="#f4f4f4" textLength="39.9" lengthAdjust="spacingAndGlyphs" >0.4126</text>
<text x="1090.2" y="921.0" font-size="16.5" fill="#f4f4f4" textLength="39.9" lengthAdjust="spacingAndGlyphs" >1.1026</text>
<text x="1161.1" y="921.0" font-size="16.5" fill="#f4f4f4" textLength="39.9" lengthAdjust="spacingAndGlyphs" >1.4051</text>
<text x="1232.3" y="921.0" font-size="16.5" fill="#f4f4f4" textLength="39.9" lengthAdjust="spacingAndGlyphs" >1.8538</text>
<text x="1302.7" y="921.0" font-size="16.5" fill="#f4f4f4" textLength="39.9" lengthAdjust="spacingAndGlyphs" >2.2002</text>
<text x="1373.6" y="921.0" font-size="16.5" fill="#f4f4f4" textLength="39.9" lengthAdjust="spacingAndGlyphs" >2.0091</text>
<text x="1444.3" y="921.0" font-size="16.5" fill="#f4f4f4" textLength="39.9" lengthAdjust="spacingAndGlyphs" >2.0759</text>
<text x="1515.4" y="921.0" font-size="16.5" fill="#f4f4f4" textLength="39.9" lengthAdjust="spacingAndGlyphs" >2.1417</text>
<text x="1586.4" y="921.0" font-size="16.5" fill="#f4f4f4" textLength="39.9" lengthAdjust="spacingAndGlyphs" >1.9866</text>
<text x="1657.1" y="921.0" font-size="16.5" fill="#f4f4f4" textLength="39.9" lengthAdjust="spacingAndGlyphs" >2.0256</text>
<rect x="826.5" y="927.0" width="898.0" height="24.6" fill="#7c7c7c" />
<rect x="816.5" y="927.0" width="10.0" height="24.6" fill="#2a2a2a" />
<text x="830.7" y="945.6" font-size="16.5" fill="#e8e8e8" textLength="33.7" lengthAdjust="spacingAndGlyphs" >dEITP</text>
<text x="941.0" y="945.6" font-size="16.5" fill="#e8e8e8" textLength="47.1" lengthAdjust="spacingAndGlyphs" >12.9162</text>
<text x="1019.3" y="945.6" font-size="16.5" fill="#e8e8e8" textLength="39.9" lengthAdjust="spacingAndGlyphs" >1.9054</text>
<text x="1090.2" y="945.6" font-size="16.5" fill="#e8e8e8" textLength="39.9" lengthAdjust="spacingAndGlyphs" >3.1240</text>
<text x="1161.1" y="945.6" font-size="16.5" fill="#e8e8e8" textLength="39.9" lengthAdjust="spacingAndGlyphs" >3.2646</text>
<text x="1232.3" y="945.6" font-size="16.5" fill="#e8e8e8" textLength="39.9" lengthAdjust="spacingAndGlyphs" >4.0363</text>
<text x="1302.7" y="945.6" font-size="16.5" fill="#e8e8e8" textLength="39.9" lengthAdjust="spacingAndGlyphs" >4.4607</text>
<text x="1373.6" y="945.6" font-size="16.5" fill="#e8e8e8" textLength="39.9" lengthAdjust="spacingAndGlyphs" >3.2863</text>
<text x="1444.3" y="945.6" font-size="16.5" fill="#e8e8e8" textLength="39.9" lengthAdjust="spacingAndGlyphs" >3.1035</text>
<text x="1515.4" y="945.6" font-size="16.5" fill="#e8e8e8" textLength="39.9" lengthAdjust="spacingAndGlyphs" >2.6022</text>
<text x="1586.4" y="945.6" font-size="16.5" fill="#e8e8e8" textLength="39.9" lengthAdjust="spacingAndGlyphs" >2.1114</text>
<text x="1657.1" y="945.6" font-size="16.5" fill="#e8e8e8" textLength="39.9" lengthAdjust="spacingAndGlyphs" >1.8230</text>
<rect x="1400.0" y="1011.5" width="520.0" height="46.5" fill="url(#strip)" />
<rect x="151.3" y="1011.3" width="111.5" height="46.7" rx="3" fill="url(#btn)"/>
<rect x="154.4" y="1015" width="105" height="27" rx="3" fill="rgb(0,0,0)" stroke="#3a3a3a" stroke-width="0.8"/>
<text x="207.0" y="1052.4" font-size="8.2" fill="#2e2e2e" text-anchor="middle" >0</text>
<rect x="265.3" y="1011.3" width="111.5" height="46.7" rx="3" fill="url(#btn)"/>
<rect x="268.4" y="1015" width="105" height="27" rx="3" fill="rgb(26,26,26)" stroke="#3a3a3a" stroke-width="0.8"/>
<text x="321.0" y="1052.4" font-size="8.2" fill="#2e2e2e" text-anchor="middle" >10</text>
<rect x="379.3" y="1011.3" width="111.5" height="46.7" rx="3" fill="url(#btn)"/>
<rect x="382.4" y="1015" width="105" height="27" rx="3" fill="rgb(51,51,51)" stroke="#3a3a3a" stroke-width="0.8"/>
<text x="435.0" y="1052.4" font-size="8.2" fill="#2e2e2e" text-anchor="middle" >20</text>
<rect x="493.3" y="1011.3" width="111.5" height="46.7" rx="3" fill="url(#btn)"/>
<rect x="496.4" y="1015" width="105" height="27" rx="3" fill="rgb(76,76,76)" stroke="#3a3a3a" stroke-width="0.8"/>
<text x="549.0" y="1052.4" font-size="8.2" fill="#2e2e2e" text-anchor="middle" >30</text>
<rect x="607.3" y="1011.3" width="111.5" height="46.7" rx="3" fill="url(#btn)"/>
<rect x="610.4" y="1015" width="105" height="27" rx="3" fill="rgb(102,102,102)" stroke="#3a3a3a" stroke-width="0.8"/>
<text x="663.0" y="1052.4" font-size="8.2" fill="#2e2e2e" text-anchor="middle" >40</text>
<rect x="721.3" y="1011.3" width="111.5" height="46.7" rx="3" fill="url(#btn)"/>
<rect x="724.4" y="1015" width="105" height="27" rx="3" fill="rgb(127,127,127)" stroke="#3a3a3a" stroke-width="0.8"/>
<text x="777.0" y="1052.4" font-size="8.2" fill="#2e2e2e" text-anchor="middle" >50</text>
<rect x="835.3" y="1011.3" width="111.5" height="46.7" rx="3" fill="url(#btn)"/>
<rect x="838.4" y="1015" width="105" height="27" rx="3" fill="rgb(153,153,153)" stroke="#3a3a3a" stroke-width="0.8"/>
<text x="891.0" y="1052.4" font-size="8.2" fill="#2e2e2e" text-anchor="middle" >60</text>
<rect x="949.3" y="1011.3" width="111.5" height="46.7" rx="3" fill="url(#btn)"/>
<rect x="952.4" y="1015" width="105" height="27" rx="3" fill="rgb(178,178,178)" stroke="#3a3a3a" stroke-width="0.8"/>
<text x="1005.0" y="1052.4" font-size="8.2" fill="#2e2e2e" text-anchor="middle" >70</text>
<rect x="1063.3" y="1011.3" width="111.5" height="46.7" rx="3" fill="url(#btn)"/>
<rect x="1066.4" y="1015" width="105" height="27" rx="3" fill="rgb(204,204,204)" stroke="#3a3a3a" stroke-width="0.8"/>
<text x="1119.0" y="1052.4" font-size="8.2" fill="#2e2e2e" text-anchor="middle" >80</text>
<rect x="1177.3" y="1011.3" width="111.5" height="46.7" rx="3" fill="url(#btn)"/>
<rect x="1180.4" y="1015" width="105" height="27" rx="3" fill="rgb(229,229,229)" stroke="#3a3a3a" stroke-width="0.8"/>
<text x="1233.0" y="1052.4" font-size="8.2" fill="#2e2e2e" text-anchor="middle" >90</text>
<rect x="1290.8" y="1011" width="113" height="47" rx="3" fill="#2e2e2e" stroke="#1e1e1e" stroke-width="1"/>
<rect x="1294.5" y="1015" width="105" height="27" rx="3" fill="#ffffff" stroke="#111" stroke-width="1"/>
<text x="1347.3" y="1052.4" font-size="8.2" fill="#ffffff" text-anchor="middle" font-weight="bold" >100</text>
<rect x="1714.9" y="1011.5" width="169.0" height="22.3" fill="url(#tbtn)" />
<rect x="1884.0" y="1011.5" width="36.0" height="22.3" fill="#2c2c2c" />
<circle cx="1902" cy="1026" r="6" fill="#333"/>
<line x1="1749.8" y1="1012.0" x2="1749.8" y2="1034.0" stroke="#4a4a4a" stroke-width="1" />
<line x1="1783.4" y1="1012.0" x2="1783.4" y2="1034.0" stroke="#4a4a4a" stroke-width="1" />
<line x1="1816.6" y1="1012.0" x2="1816.6" y2="1034.0" stroke="#4a4a4a" stroke-width="1" />
<line x1="1850.7" y1="1012.0" x2="1850.7" y2="1034.0" stroke="#4a4a4a" stroke-width="1" />
<circle cx="1732.3" cy="1027" r="6" fill="#7e7e7e"/>
<circle cx="1766.6" cy="1027" r="6" fill="#7e7e7e"/>
<circle cx="1800" cy="1027" r="6" fill="#7e7e7e"/>
<circle cx="1833.6" cy="1027" r="6" fill="#7e7e7e"/>
<circle cx="1867.3" cy="1027" r="6" fill="#7e7e7e"/>
<rect x="1677.5" y="1026.6" width="36" height="31.4" rx="2.5" fill="#7a7a7a"/>
<rect x="1684.6" y="1030.6" width="19" height="19" rx="3" fill="#bdbdbd" stroke="#1a1a1a" stroke-width="1.8"/><rect x="1690.8" y="1036.6" width="7" height="7" fill="#000"/>
<rect x="1714.9" y="1035" width="204" height="21.7" rx="2" fill="url(#nav)"/>
<line x1="1816.6" y1="1035.0" x2="1816.6" y2="1056.7" stroke="#707070" stroke-width="1" />
<circle cx="1737.8" cy="1045.8" r="7" fill="#8e8e8e"/><circle cx="1897.3" cy="1045.8" r="7" fill="#8e8e8e"/>
<text x="1737.8" y="1050.3" font-size="13.0" fill="#2a2a2a" text-anchor="middle" >«</text>
<text x="1897.3" y="1050.3" font-size="13.0" fill="#2a2a2a" text-anchor="middle" >»</text>
<text x="1757.9" y="1052.1" font-size="17.4" fill="#2a2a2a" textLength="37.2" lengthAdjust="spacingAndGlyphs" >Back</text>
<text x="1838.0" y="1052.1" font-size="17.4" fill="#2a2a2a" textLength="38.5" lengthAdjust="spacingAndGlyphs" >Next</text>
<path d="M1631 996.5 L1670 1004.5 L1671 1026.5 L1641.5 1029.5 M1631.5 997 L1633.5 1034 L1656 1046.5 L1697 1033 L1675 1028" fill="none" stroke="#d8d8d8" stroke-opacity="0.75" stroke-width="6.2" stroke-linejoin="round" stroke-linecap="round"/>
<path d="M1631 996.5 L1670 1004.5 L1671 1026.5 L1641.5 1029.5 M1631.5 997 L1633.5 1034 L1656 1046.5 L1697 1033 L1675 1028" fill="none" stroke="#92262f" stroke-width="4" stroke-linejoin="round" stroke-linecap="round"/>
<path d="M1642.5 1010 Q1646 1007.5 1649 1010 L1655.5 1022 L1675 997" fill="none" stroke="#d8d8d8" stroke-opacity="0.8" stroke-width="5.6" stroke-linejoin="round" stroke-linecap="round"/>
<path d="M1642.5 1010 Q1646 1007.5 1649 1010 L1655.5 1022 L1675 997" fill="none" stroke="#262626" stroke-width="3.4" stroke-linejoin="round" stroke-linecap="round"/>
<text x="1675" y="1025" font-size="28" font-weight="bold" fill="#a02c36" fill-opacity="0.78" stroke="#e6e6e6" stroke-opacity="0.8" stroke-width="2.2" stroke-linejoin="round" textLength="148.7" lengthAdjust="spacingAndGlyphs" paint-order="stroke">NOTEBOOK</text>
<text x="1825" y="1025" font-size="28" fill="#161616" fill-opacity="0.9" stroke="#e6e6e6" stroke-opacity="0.85" stroke-width="2.4" stroke-linejoin="round" textLength="87" lengthAdjust="spacingAndGlyphs" paint-order="stroke">CHECK</text>
</svg>
</body></html>
